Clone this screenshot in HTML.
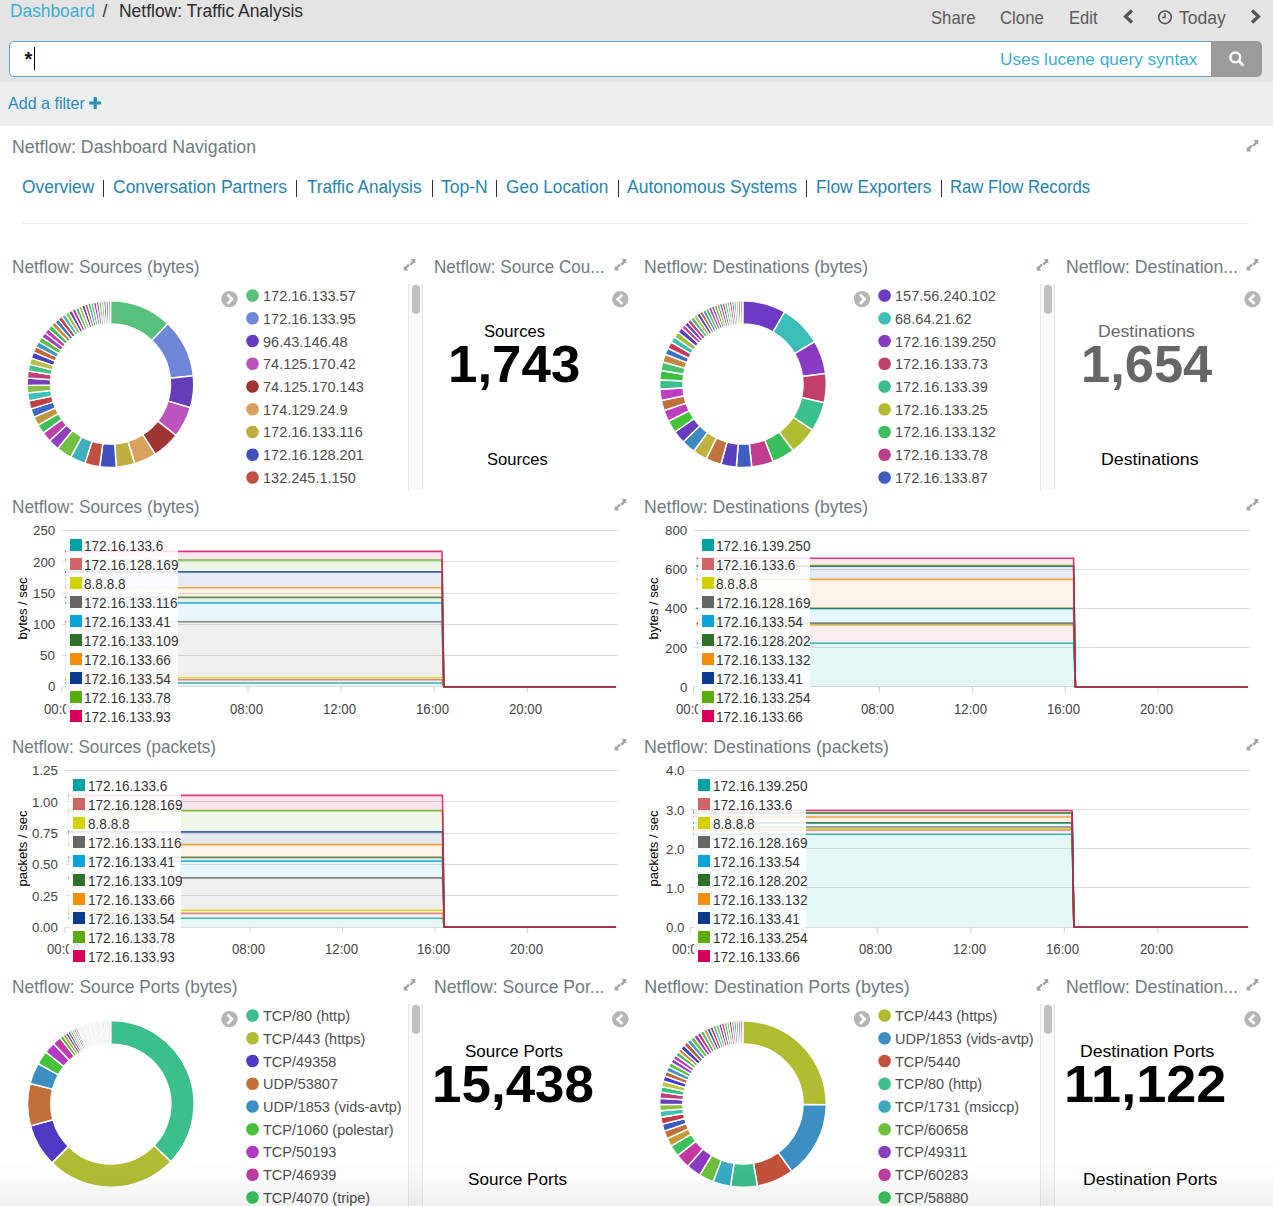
<!DOCTYPE html><html><head><meta charset="utf-8"><title>Netflow: Traffic Analysis</title><style>
html,body{margin:0;padding:0;}
body{width:1273px;height:1206px;overflow:hidden;position:relative;background:#fff;font-family:"Liberation Sans",sans-serif;}
.a{position:absolute;}
.t{position:absolute;white-space:nowrap;transform-origin:0 0;}
</style></head><body><div class="a" style="left:0.00px;top:0.00px;width:1273.00px;height:82.00px;background:#e4e4e4;"></div><div class="t" style="left:10.20px;top:3.00px;font-size:17.6px;line-height:17.6px;color:#3caed2;transform:scaleX(0.9852);">Dashboard</div><div class="t" style="left:102.50px;top:3.00px;font-size:17.6px;line-height:17.6px;color:#333;">/</div><div class="t" style="left:119.40px;top:3.00px;font-size:17.6px;line-height:17.6px;color:#2b2b2b;transform:scaleX(0.9923);">Netflow: Traffic Analysis</div><div class="t" style="left:930.70px;top:10.00px;font-size:17.7px;line-height:17.7px;color:#5a5a5a;transform:scaleX(0.9428);">Share</div><div class="t" style="left:1000.00px;top:10.00px;font-size:17.7px;line-height:17.7px;color:#5a5a5a;transform:scaleX(0.9478);">Clone</div><div class="t" style="left:1069.30px;top:10.00px;font-size:17.7px;line-height:17.7px;color:#5a5a5a;transform:scaleX(0.9351);">Edit</div><div class="t" style="left:1179.10px;top:10.00px;font-size:17.7px;line-height:17.7px;color:#5a5a5a;transform:scaleX(0.9916);">Today</div><svg class="a" style="left:1118px;top:5px" width="22" height="24" viewBox="1118 5 22 24"><path d="M1132 10.5 L1125.5 16.5 L1132 22.5" stroke="#555" stroke-width="3.2" fill="none"/></svg><svg class="a" style="left:1246px;top:5px" width="22" height="24" viewBox="1246 5 22 24"><path d="M1252 10.5 L1258.5 16.5 L1252 22.5" stroke="#555" stroke-width="3.2" fill="none"/></svg><svg class="a" style="left:1155px;top:7px" width="22" height="22" viewBox="1155 7 22 22"><circle cx="1165" cy="17.3" r="6.3" stroke="#555" stroke-width="1.6" fill="none"/><path d="M1165 13.3 V17.6 H1162" stroke="#555" stroke-width="1.5" fill="none"/></svg><div class="a" style="left:9.00px;top:41.00px;width:1203.00px;height:36.00px;background:#fff;border:1px solid #5fa9c5;border-radius:5px 0 0 5px;box-sizing:border-box"></div><div class="t" style="left:24.60px;top:49.00px;font-size:20px;line-height:20px;color:#111;font-weight:bold;">*</div><div class="a" style="left:34.00px;top:47.30px;width:1.30px;height:22.60px;background:#000;"></div><div class="t" style="left:999.90px;top:51.00px;font-size:17.4px;line-height:17.4px;color:#3caed2;transform:scaleX(0.9913);">Uses lucene query syntax</div><div class="a" style="left:1211.00px;top:41.00px;width:51.00px;height:36.00px;background:#9b9b9b;border-radius:0 5px 5px 0"></div><svg class="a" style="left:1225px;top:47px" width="24" height="24" viewBox="1225 47 24 24"><circle cx="1235.3" cy="57.4" r="4.9" stroke="#fff" stroke-width="2.4" fill="none"/><path d="M1238.8 61 L1242.6 64.8" stroke="#fff" stroke-width="2.8" stroke-linecap="round"/></svg><div class="a" style="left:0.00px;top:82.00px;width:1273.00px;height:44.00px;background:#ebeff0;"></div><div class="t" style="left:8.00px;top:95.00px;font-size:16.5px;line-height:16.5px;color:#2a8db4;transform:scaleX(0.9737);">Add a filter</div><svg class="a" style="left:88px;top:96px" width="14" height="14" viewBox="88 96 14 14"><path d="M95.2 97 V109 M89.2 103 H101.2" stroke="#2a8db4" stroke-width="3.2"/></svg><div class="t" style="left:12.20px;top:139.00px;font-size:17.9px;line-height:17.9px;color:#6f7b80;transform:scaleX(0.9894);">Netflow: Dashboard Navigation</div><svg class="a" style="left:1245px;top:138px" width="16" height="16" viewBox="1245 138 16 16"><polygon points="1253.50,139.90 1258.30,139.90 1258.30,144.70 1257.06,143.46 1253.95,146.57 1252.32,144.94 1255.43,141.83" fill="#9ea3a7"/><polygon points="1251.50,151.50 1246.70,151.50 1246.70,146.70 1247.94,147.94 1251.05,144.83 1252.68,146.46 1249.57,149.57" fill="#9ea3a7"/></svg><div class="t" style="left:22.40px;top:179.00px;font-size:17.6px;line-height:17.6px;color:#2683aa;transform:scaleX(0.9861);">Overview</div><div class="t" style="left:113.40px;top:179.00px;font-size:17.6px;line-height:17.6px;color:#2683aa;transform:scaleX(0.9940);">Conversation Partners</div><div class="t" style="left:306.70px;top:179.00px;font-size:17.6px;line-height:17.6px;color:#2683aa;transform:scaleX(0.9755);">Traffic Analysis</div><div class="t" style="left:441.00px;top:179.00px;font-size:17.6px;line-height:17.6px;color:#2683aa;transform:scaleX(0.9951);">Top-N</div><div class="t" style="left:506.40px;top:179.00px;font-size:17.6px;line-height:17.6px;color:#2683aa;transform:scaleX(0.9774);">Geo Location</div><div class="t" style="left:627.40px;top:179.00px;font-size:17.6px;line-height:17.6px;color:#2683aa;transform:scaleX(0.9940);">Autonomous Systems</div><div class="t" style="left:816.20px;top:179.00px;font-size:17.6px;line-height:17.6px;color:#2683aa;transform:scaleX(0.9845);">Flow Exporters</div><div class="t" style="left:950.10px;top:179.00px;font-size:17.6px;line-height:17.6px;color:#2683aa;transform:scaleX(0.9497);">Raw Flow Records</div><div class="a" style="left:102.70px;top:180.00px;width:1.10px;height:17.00px;background:#3a2c2c;"></div><div class="a" style="left:296.30px;top:180.00px;width:1.10px;height:17.00px;background:#3a2c2c;"></div><div class="a" style="left:431.80px;top:180.00px;width:1.10px;height:17.00px;background:#3a2c2c;"></div><div class="a" style="left:496.30px;top:180.00px;width:1.10px;height:17.00px;background:#3a2c2c;"></div><div class="a" style="left:617.80px;top:180.00px;width:1.10px;height:17.00px;background:#3a2c2c;"></div><div class="a" style="left:806.10px;top:180.00px;width:1.10px;height:17.00px;background:#3a2c2c;"></div><div class="a" style="left:940.50px;top:180.00px;width:1.10px;height:17.00px;background:#3a2c2c;"></div><div class="a" style="left:22.00px;top:222.60px;width:1227.00px;height:1.00px;background:#ececec;"></div><div class="t" style="left:12.00px;top:259.00px;font-size:17.9px;line-height:17.9px;color:#6f7b80;transform:scaleX(0.9622);">Netflow: Sources (bytes)</div><svg class="a" style="left:402px;top:257px" width="16" height="16" viewBox="402 257 16 16"><polygon points="410.50,258.90 415.30,258.90 415.30,263.70 414.06,262.46 410.95,265.57 409.32,263.94 412.43,260.83" fill="#9ea3a7"/><polygon points="408.50,270.50 403.70,270.50 403.70,265.70 404.94,266.94 408.05,263.83 409.68,265.46 406.57,268.57" fill="#9ea3a7"/></svg><div class="t" style="left:433.50px;top:259.00px;font-size:17.9px;line-height:17.9px;color:#6f7b80;transform:scaleX(0.9526);">Netflow: Source Cou...</div><svg class="a" style="left:613px;top:257px" width="16" height="16" viewBox="613 257 16 16"><polygon points="621.50,258.90 626.30,258.90 626.30,263.70 625.06,262.46 621.95,265.57 620.32,263.94 623.43,260.83" fill="#9ea3a7"/><polygon points="619.50,270.50 614.70,270.50 614.70,265.70 615.94,266.94 619.05,263.83 620.68,265.46 617.57,268.57" fill="#9ea3a7"/></svg><div class="t" style="left:644.30px;top:259.00px;font-size:17.9px;line-height:17.9px;color:#6f7b80;transform:scaleX(0.9838);">Netflow: Destinations (bytes)</div><svg class="a" style="left:1035px;top:257px" width="16" height="16" viewBox="1035 257 16 16"><polygon points="1043.50,258.90 1048.30,258.90 1048.30,263.70 1047.06,262.46 1043.95,265.57 1042.32,263.94 1045.43,260.83" fill="#9ea3a7"/><polygon points="1041.50,270.50 1036.70,270.50 1036.70,265.70 1037.94,266.94 1041.05,263.83 1042.68,265.46 1039.57,268.57" fill="#9ea3a7"/></svg><div class="t" style="left:1065.90px;top:259.00px;font-size:17.9px;line-height:17.9px;color:#6f7b80;transform:scaleX(0.9884);">Netflow: Destination...</div><svg class="a" style="left:1245px;top:257px" width="16" height="16" viewBox="1245 257 16 16"><polygon points="1253.50,258.90 1258.30,258.90 1258.30,263.70 1257.06,262.46 1253.95,265.57 1252.32,263.94 1255.43,260.83" fill="#9ea3a7"/><polygon points="1251.50,270.50 1246.70,270.50 1246.70,265.70 1247.94,266.94 1251.05,263.83 1252.68,265.46 1249.57,268.57" fill="#9ea3a7"/></svg><svg class="a" style="left:25px;top:298px" width="171" height="172" viewBox="25 298 171 172"><path d="M110.50 300.80 A83.30 83.30 0 0 1 167.84 323.68 L151.80 340.58 A60.00 60.00 0 0 0 110.50 324.10 Z" fill="#57c17b" stroke="#fff" stroke-width="1.50"/><path d="M167.84 323.68 A83.30 83.30 0 0 1 193.39 375.83 L170.20 378.14 A60.00 60.00 0 0 0 151.80 340.58 Z" fill="#6f87d8" stroke="#fff" stroke-width="1.50"/><path d="M193.39 375.83 A83.30 83.30 0 0 1 190.37 407.76 L168.03 401.14 A60.00 60.00 0 0 0 170.20 378.14 Z" fill="#663db8" stroke="#fff" stroke-width="1.50"/><path d="M190.37 407.76 A83.30 83.30 0 0 1 176.05 435.50 L157.72 421.12 A60.00 60.00 0 0 0 168.03 401.14 Z" fill="#bc52bc" stroke="#fff" stroke-width="1.50"/><path d="M176.05 435.50 A83.30 83.30 0 0 1 155.26 454.35 L142.74 434.70 A60.00 60.00 0 0 0 157.72 421.12 Z" fill="#9e3533" stroke="#fff" stroke-width="1.50"/><path d="M155.26 454.35 A83.30 83.30 0 0 1 134.72 463.80 L127.94 441.51 A60.00 60.00 0 0 0 142.74 434.70 Z" fill="#daa05d" stroke="#fff" stroke-width="1.50"/><path d="M134.72 463.80 A83.30 83.30 0 0 1 116.31 467.20 L114.69 443.95 A60.00 60.00 0 0 0 127.94 441.51 Z" fill="#bfaf40" stroke="#fff" stroke-width="1.50"/><path d="M116.31 467.20 A83.30 83.30 0 0 1 99.77 466.71 L102.77 443.60 A60.00 60.00 0 0 0 114.69 443.95 Z" fill="#4050bf" stroke="#fff" stroke-width="1.50"/><path d="M99.77 466.71 A83.30 83.30 0 0 1 84.90 463.37 L92.06 441.20 A60.00 60.00 0 0 0 102.77 443.60 Z" fill="#bf5040" stroke="#fff" stroke-width="1.50"/><path d="M84.90 463.37 A83.30 83.30 0 0 1 70.62 457.24 L81.78 436.78 A60.00 60.00 0 0 0 92.06 441.20 Z" fill="#40afbf" stroke="#fff" stroke-width="1.50"/><path d="M70.62 457.24 A83.30 83.30 0 0 1 57.74 448.56 L72.50 430.53 A60.00 60.00 0 0 0 81.78 436.78 Z" fill="#70bf40" stroke="#fff" stroke-width="1.50"/><path d="M57.74 448.56 A83.30 83.30 0 0 1 49.58 440.91 L66.62 425.02 A60.00 60.00 0 0 0 72.50 430.53 Z" fill="#8f40bf" stroke="#fff" stroke-width="1.50"/><path d="M49.58 440.91 A83.30 83.30 0 0 1 43.11 433.06 L61.96 419.37 A60.00 60.00 0 0 0 66.62 425.02 Z" fill="#bf40a7" stroke="#fff" stroke-width="1.50"/><path d="M43.11 433.06 A83.30 83.30 0 0 1 38.02 425.16 L58.29 413.67 A60.00 60.00 0 0 0 61.96 419.37 Z" fill="#40bf58" stroke="#fff" stroke-width="1.30"/><path d="M38.02 425.16 A83.30 83.30 0 0 1 34.01 417.08 L55.40 407.85 A60.00 60.00 0 0 0 58.29 413.67 Z" fill="#bf9740" stroke="#fff" stroke-width="1.30"/><path d="M34.01 417.08 A83.30 83.30 0 0 1 30.99 408.96 L53.23 402.00 A60.00 60.00 0 0 0 55.40 407.85 Z" fill="#4068bf" stroke="#fff" stroke-width="1.30"/><path d="M30.99 408.96 A83.30 83.30 0 0 1 28.91 400.90 L51.73 396.20 A60.00 60.00 0 0 0 53.23 402.00 Z" fill="#bf4048" stroke="#fff" stroke-width="1.30"/><path d="M28.91 400.90 A83.30 83.30 0 0 1 27.68 393.02 L50.84 390.52 A60.00 60.00 0 0 0 51.73 396.20 Z" fill="#40bfb7" stroke="#fff" stroke-width="1.30"/><path d="M27.68 393.02 A83.30 83.30 0 0 1 27.21 385.37 L50.51 385.01 A60.00 60.00 0 0 0 50.84 390.52 Z" fill="#87bf40" stroke="#fff" stroke-width="1.30"/><path d="M27.21 385.37 A83.30 83.30 0 0 1 27.42 378.01 L50.66 379.71 A60.00 60.00 0 0 0 50.51 385.01 Z" fill="#7840bf" stroke="#fff" stroke-width="1.30"/><path d="M27.42 378.01 A83.30 83.30 0 0 1 28.24 370.99 L51.25 374.66 A60.00 60.00 0 0 0 50.66 379.71 Z" fill="#bf4078" stroke="#fff" stroke-width="1.30"/><path d="M28.24 370.99 A83.30 83.30 0 0 1 29.58 364.34 L52.21 369.87 A60.00 60.00 0 0 0 51.25 374.66 Z" fill="#40bf87" stroke="#fff" stroke-width="1.30"/><path d="M29.58 364.34 A83.30 83.30 0 0 1 31.37 358.08 L53.50 365.36 A60.00 60.00 0 0 0 52.21 369.87 Z" fill="#b7bf40" stroke="#fff" stroke-width="1.30"/><path d="M31.37 358.08 A83.30 83.30 0 0 1 33.54 352.22 L55.07 361.14 A60.00 60.00 0 0 0 53.50 365.36 Z" fill="#4840bf" stroke="#fff" stroke-width="1.30"/><path d="M33.54 352.22 A83.30 83.30 0 0 1 36.04 346.77 L56.86 357.21 A60.00 60.00 0 0 0 55.07 361.14 Z" fill="#bf6840" stroke="#fff" stroke-width="1.30"/><path d="M36.04 346.77 A83.30 83.30 0 0 1 38.79 341.71 L58.85 353.57 A60.00 60.00 0 0 0 56.86 357.21 Z" fill="#4097bf" stroke="#fff" stroke-width="1.30"/><path d="M38.79 341.71 A83.30 83.30 0 0 1 41.76 337.04 L60.99 350.21 A60.00 60.00 0 0 0 58.85 353.57 Z" fill="#58bf40" stroke="#fff" stroke-width="1.30"/><path d="M41.76 337.04 A83.30 83.30 0 0 1 44.90 332.76 L63.25 347.12 A60.00 60.00 0 0 0 60.99 350.21 Z" fill="#a740bf" stroke="#fff" stroke-width="1.30"/><path d="M44.90 332.76 A83.30 83.30 0 0 1 48.16 328.84 L65.60 344.30 A60.00 60.00 0 0 0 63.25 347.12 Z" fill="#bf40b3" stroke="#fff" stroke-width="1.30"/><path d="M48.16 328.84 A83.30 83.30 0 0 1 51.52 325.28 L68.02 341.73 A60.00 60.00 0 0 0 65.60 344.30 Z" fill="#40bf4c" stroke="#fff" stroke-width="1.30"/><path d="M51.52 325.28 A83.30 83.30 0 0 1 54.93 322.05 L70.47 339.40 A60.00 60.00 0 0 0 68.02 341.73 Z" fill="#bf8b40" stroke="#fff" stroke-width="1.30"/><path d="M54.93 322.05 A83.30 83.30 0 0 1 58.37 319.13 L72.95 337.30 A60.00 60.00 0 0 0 70.47 339.40 Z" fill="#4074bf" stroke="#fff" stroke-width="1.30"/><path d="M58.37 319.13 A83.30 83.30 0 0 1 61.81 316.51 L75.43 335.42 A60.00 60.00 0 0 0 72.95 337.30 Z" fill="#bf4054" stroke="#fff" stroke-width="1.30"/><path d="M61.81 316.51 A83.30 83.30 0 0 1 65.24 314.17 L77.90 333.73 A60.00 60.00 0 0 0 75.43 335.42 Z" fill="#40bfab" stroke="#fff" stroke-width="1.30"/><path d="M65.24 314.17 A83.30 83.30 0 0 1 68.64 312.08 L80.35 332.22 A60.00 60.00 0 0 0 77.90 333.73 Z" fill="#93bf40" stroke="#fff" stroke-width="1.30"/><path d="M68.64 312.08 A83.30 83.30 0 0 1 72.00 310.23 L82.77 330.89 A60.00 60.00 0 0 0 80.35 332.22 Z" fill="#6c40bf" stroke="#fff" stroke-width="1.30"/><path d="M72.00 310.23 A83.30 83.30 0 0 1 75.30 308.60 L85.14 329.72 A60.00 60.00 0 0 0 82.77 330.89 Z" fill="#bf4083" stroke="#fff" stroke-width="1.30"/><path d="M75.30 308.60 A83.30 83.30 0 0 1 78.53 307.18 L87.47 328.70 A60.00 60.00 0 0 0 85.14 329.72 Z" fill="#40bf7c" stroke="#fff" stroke-width="1.30"/><path d="M78.53 307.18 A83.30 83.30 0 0 1 81.68 305.94 L89.74 327.80 A60.00 60.00 0 0 0 87.47 328.70 Z" fill="#bfbb40" stroke="#fff" stroke-width="1.30"/><path d="M81.68 305.94 A83.30 83.30 0 0 1 84.76 304.88 L91.96 327.04 A60.00 60.00 0 0 0 89.74 327.80 Z" fill="#4044bf" stroke="#fff" stroke-width="1.30"/><path d="M84.76 304.88 A83.30 83.30 0 0 1 87.74 303.97 L94.11 326.38 A60.00 60.00 0 0 0 91.96 327.04 Z" fill="#bf5c40" stroke="#fff" stroke-width="1.30"/><path d="M87.74 303.97 A83.30 83.30 0 0 1 90.64 303.20 L96.20 325.83 A60.00 60.00 0 0 0 94.11 326.38 Z" fill="#40a3bf" stroke="#fff" stroke-width="1.30"/><path d="M90.64 303.20 A83.30 83.30 0 0 1 93.45 302.56 L98.22 325.37 A60.00 60.00 0 0 0 96.20 325.83 Z" fill="#64bf40" stroke="#fff" stroke-width="1.30"/><path d="M93.45 302.56 A83.30 83.30 0 0 1 96.16 302.04 L100.17 325.00 A60.00 60.00 0 0 0 98.22 325.37 Z" fill="#9b40bf" stroke="#fff" stroke-width="1.30"/><path d="M96.16 302.04 A83.30 83.30 0 0 1 98.78 301.63 L102.06 324.70 A60.00 60.00 0 0 0 100.17 325.00 Z" fill="#bf409b" stroke="#fff" stroke-width="1.30"/><path d="M98.78 301.63 A83.30 83.30 0 0 1 101.31 301.31 L103.88 324.47 A60.00 60.00 0 0 0 102.06 324.70 Z" fill="#40bf64" stroke="#fff" stroke-width="1.30"/><path d="M101.31 301.31 A83.30 83.30 0 0 1 103.74 301.07 L105.63 324.30 A60.00 60.00 0 0 0 103.88 324.47 Z" fill="#bfa340" stroke="#fff" stroke-width="1.30"/><path d="M103.74 301.07 A83.30 83.30 0 0 1 106.09 300.92 L107.32 324.18 A60.00 60.00 0 0 0 105.63 324.30 Z" fill="#405cbf" stroke="#fff" stroke-width="1.30"/><path d="M106.09 300.92 A83.30 83.30 0 0 1 108.34 300.83 L108.94 324.12 A60.00 60.00 0 0 0 107.32 324.18 Z" fill="#bf4440" stroke="#fff" stroke-width="1.30"/><path d="M108.34 300.83 A83.30 83.30 0 0 1 110.50 300.80 L110.50 324.10 A60.00 60.00 0 0 0 108.94 324.12 Z" fill="#40bbbf" stroke="#fff" stroke-width="1.30"/></svg><svg class="a" style="left:657px;top:298px" width="172" height="172" viewBox="657 298 172 172"><path d="M743.00 300.80 A83.30 83.30 0 0 1 784.65 311.96 L773.00 332.14 A60.00 60.00 0 0 0 743.00 324.10 Z" fill="#6c3ac3" stroke="#fff" stroke-width="1.50"/><path d="M784.65 311.96 A83.30 83.30 0 0 1 814.70 341.70 L794.64 353.56 A60.00 60.00 0 0 0 773.00 332.14 Z" fill="#3dbdb8" stroke="#fff" stroke-width="1.50"/><path d="M814.70 341.70 A83.30 83.30 0 0 1 825.62 373.52 L802.51 376.48 A60.00 60.00 0 0 0 794.64 353.56 Z" fill="#8a3ac3" stroke="#fff" stroke-width="1.50"/><path d="M825.62 373.52 A83.30 83.30 0 0 1 824.17 402.84 L801.46 397.60 A60.00 60.00 0 0 0 802.51 376.48 Z" fill="#c03d6a" stroke="#fff" stroke-width="1.50"/><path d="M824.17 402.84 A83.30 83.30 0 0 1 812.46 430.08 L793.03 417.22 A60.00 60.00 0 0 0 801.46 397.60 Z" fill="#3bbf8c" stroke="#fff" stroke-width="1.50"/><path d="M812.46 430.08 A83.30 83.30 0 0 1 793.13 450.63 L779.11 432.02 A60.00 60.00 0 0 0 793.03 417.22 Z" fill="#b2bc33" stroke="#fff" stroke-width="1.50"/><path d="M793.13 450.63 A83.30 83.30 0 0 1 773.12 461.76 L764.70 440.04 A60.00 60.00 0 0 0 779.11 432.02 Z" fill="#3bbf5a" stroke="#fff" stroke-width="1.50"/><path d="M773.12 461.76 A83.30 83.30 0 0 1 751.71 466.94 L749.27 443.77 A60.00 60.00 0 0 0 764.70 440.04 Z" fill="#c03d8c" stroke="#fff" stroke-width="1.50"/><path d="M751.71 466.94 A83.30 83.30 0 0 1 736.32 467.13 L738.19 443.91 A60.00 60.00 0 0 0 749.27 443.77 Z" fill="#3d5dc0" stroke="#fff" stroke-width="1.50"/><path d="M736.32 467.13 A83.30 83.30 0 0 1 720.88 464.41 L727.07 441.95 A60.00 60.00 0 0 0 738.19 443.91 Z" fill="#5a3dc0" stroke="#fff" stroke-width="1.50"/><path d="M720.88 464.41 A83.30 83.30 0 0 1 706.22 458.84 L716.51 437.94 A60.00 60.00 0 0 0 727.07 441.95 Z" fill="#c0733d" stroke="#fff" stroke-width="1.50"/><path d="M706.22 458.84 A83.30 83.30 0 0 1 693.69 451.23 L707.48 432.46 A60.00 60.00 0 0 0 716.51 437.94 Z" fill="#c0b03d" stroke="#fff" stroke-width="1.50"/><path d="M693.69 451.23 A83.30 83.30 0 0 1 683.08 441.97 L699.84 425.78 A60.00 60.00 0 0 0 707.48 432.46 Z" fill="#3d8ac0" stroke="#fff" stroke-width="1.50"/><path d="M683.08 441.97 A83.30 83.30 0 0 1 674.85 432.00 L693.91 418.60 A60.00 60.00 0 0 0 699.84 425.78 Z" fill="#6a3dc0" stroke="#fff" stroke-width="1.50"/><path d="M674.85 432.00 A83.30 83.30 0 0 1 668.39 421.14 L689.26 410.78 A60.00 60.00 0 0 0 693.91 418.60 Z" fill="#45c13a" stroke="#fff" stroke-width="1.50"/><path d="M668.39 421.14 A83.30 83.30 0 0 1 664.00 410.53 L686.10 403.14 A60.00 60.00 0 0 0 689.26 410.78 Z" fill="#c03dc0" stroke="#fff" stroke-width="1.50"/><path d="M664.00 410.53 A83.30 83.30 0 0 1 661.31 400.42 L684.16 395.86 A60.00 60.00 0 0 0 686.10 403.14 Z" fill="#c0703d" stroke="#fff" stroke-width="1.50"/><path d="M661.31 400.42 A83.30 83.30 0 0 1 659.86 389.33 L683.12 387.87 A60.00 60.00 0 0 0 684.16 395.86 Z" fill="#c03dc0" stroke="#fff" stroke-width="1.50"/><path d="M659.86 389.33 A83.30 83.30 0 0 1 659.81 379.74 L683.08 380.96 A60.00 60.00 0 0 0 683.12 387.87 Z" fill="#3bbf8c" stroke="#fff" stroke-width="1.50"/><path d="M659.81 379.74 A83.30 83.30 0 0 1 660.82 370.49 L683.81 374.30 A60.00 60.00 0 0 0 683.08 380.96 Z" fill="#3dc040" stroke="#fff" stroke-width="1.50"/><path d="M660.82 370.49 A83.30 83.30 0 0 1 662.69 361.98 L685.15 368.17 A60.00 60.00 0 0 0 683.81 374.30 Z" fill="#4cc06a" stroke="#fff" stroke-width="1.50"/><path d="M662.69 361.98 A83.30 83.30 0 0 1 665.23 354.25 L686.99 362.60 A60.00 60.00 0 0 0 685.15 368.17 Z" fill="#c0883d" stroke="#fff" stroke-width="1.50"/><path d="M665.23 354.25 A83.30 83.30 0 0 1 667.81 348.24 L688.84 358.27 A60.00 60.00 0 0 0 686.99 362.60 Z" fill="#3d70c0" stroke="#fff" stroke-width="1.50"/><path d="M667.81 348.24 A83.30 83.30 0 0 1 671.08 342.07 L691.20 353.83 A60.00 60.00 0 0 0 688.84 358.27 Z" fill="#c03d55" stroke="#fff" stroke-width="1.50"/><path d="M671.08 342.07 A83.30 83.30 0 0 1 674.35 336.92 L693.55 350.12 A60.00 60.00 0 0 0 691.20 353.83 Z" fill="#3dc0a8" stroke="#fff" stroke-width="1.50"/><path d="M674.35 336.92 A83.30 83.30 0 0 1 677.99 332.02 L696.17 346.59 A60.00 60.00 0 0 0 693.55 350.12 Z" fill="#9ac03d" stroke="#fff" stroke-width="1.50"/><path d="M677.99 332.02 A83.30 83.30 0 0 1 681.58 327.82 L698.76 343.56 A60.00 60.00 0 0 0 696.17 346.59 Z" fill="#5a3dc0" stroke="#fff" stroke-width="1.50"/><path d="M681.58 327.82 A83.30 83.30 0 0 1 684.61 324.69 L700.95 341.30 A60.00 60.00 0 0 0 698.76 343.56 Z" fill="#c03db0" stroke="#fff" stroke-width="1.50"/><path d="M684.61 324.69 A83.30 83.30 0 0 1 687.62 321.88 L703.11 339.28 A60.00 60.00 0 0 0 700.95 341.30 Z" fill="#7840bf" stroke="#fff" stroke-width="1.20"/><path d="M687.62 321.88 A83.30 83.30 0 0 1 690.64 319.31 L705.29 337.43 A60.00 60.00 0 0 0 703.11 339.28 Z" fill="#bf4078" stroke="#fff" stroke-width="1.20"/><path d="M690.64 319.31 A83.30 83.30 0 0 1 693.67 316.97 L707.47 335.75 A60.00 60.00 0 0 0 705.29 337.43 Z" fill="#40bf87" stroke="#fff" stroke-width="1.20"/><path d="M693.67 316.97 A83.30 83.30 0 0 1 696.70 314.85 L709.65 334.22 A60.00 60.00 0 0 0 707.47 335.75 Z" fill="#b7bf40" stroke="#fff" stroke-width="1.20"/><path d="M696.70 314.85 A83.30 83.30 0 0 1 699.70 312.94 L711.81 332.84 A60.00 60.00 0 0 0 709.65 334.22 Z" fill="#4840bf" stroke="#fff" stroke-width="1.20"/><path d="M699.70 312.94 A83.30 83.30 0 0 1 702.68 311.21 L713.96 331.60 A60.00 60.00 0 0 0 711.81 332.84 Z" fill="#bf6840" stroke="#fff" stroke-width="1.20"/><path d="M702.68 311.21 A83.30 83.30 0 0 1 705.62 309.66 L716.07 330.48 A60.00 60.00 0 0 0 713.96 331.60 Z" fill="#4097bf" stroke="#fff" stroke-width="1.20"/><path d="M705.62 309.66 A83.30 83.30 0 0 1 708.51 308.28 L718.15 329.49 A60.00 60.00 0 0 0 716.07 330.48 Z" fill="#58bf40" stroke="#fff" stroke-width="1.20"/><path d="M708.51 308.28 A83.30 83.30 0 0 1 711.34 307.05 L720.20 328.60 A60.00 60.00 0 0 0 718.15 329.49 Z" fill="#a740bf" stroke="#fff" stroke-width="1.20"/><path d="M711.34 307.05 A83.30 83.30 0 0 1 714.12 305.97 L722.20 327.82 A60.00 60.00 0 0 0 720.20 328.60 Z" fill="#bf40b3" stroke="#fff" stroke-width="1.20"/><path d="M714.12 305.97 A83.30 83.30 0 0 1 716.84 305.01 L724.16 327.14 A60.00 60.00 0 0 0 722.20 327.82 Z" fill="#40bf4c" stroke="#fff" stroke-width="1.20"/><path d="M716.84 305.01 A83.30 83.30 0 0 1 719.49 304.19 L726.07 326.54 A60.00 60.00 0 0 0 724.16 327.14 Z" fill="#bf8b40" stroke="#fff" stroke-width="1.20"/><path d="M719.49 304.19 A83.30 83.30 0 0 1 722.08 303.47 L727.93 326.02 A60.00 60.00 0 0 0 726.07 326.54 Z" fill="#4074bf" stroke="#fff" stroke-width="1.20"/><path d="M722.08 303.47 A83.30 83.30 0 0 1 724.59 302.86 L729.74 325.58 A60.00 60.00 0 0 0 727.93 326.02 Z" fill="#bf4054" stroke="#fff" stroke-width="1.20"/><path d="M724.59 302.86 A83.30 83.30 0 0 1 727.03 302.34 L731.50 325.21 A60.00 60.00 0 0 0 729.74 325.58 Z" fill="#40bfab" stroke="#fff" stroke-width="1.20"/><path d="M727.03 302.34 A83.30 83.30 0 0 1 729.40 301.92 L733.21 324.90 A60.00 60.00 0 0 0 731.50 325.21 Z" fill="#93bf40" stroke="#fff" stroke-width="1.20"/><path d="M729.40 301.92 A83.30 83.30 0 0 1 731.70 301.57 L734.86 324.65 A60.00 60.00 0 0 0 733.21 324.90 Z" fill="#6c40bf" stroke="#fff" stroke-width="1.20"/><path d="M731.70 301.57 A83.30 83.30 0 0 1 733.93 301.30 L736.47 324.46 A60.00 60.00 0 0 0 734.86 324.65 Z" fill="#bf4083" stroke="#fff" stroke-width="1.20"/><path d="M733.93 301.30 A83.30 83.30 0 0 1 736.08 301.09 L738.02 324.31 A60.00 60.00 0 0 0 736.47 324.46 Z" fill="#40bf7c" stroke="#fff" stroke-width="1.20"/><path d="M736.08 301.09 A83.30 83.30 0 0 1 738.17 300.94 L739.52 324.20 A60.00 60.00 0 0 0 738.02 324.31 Z" fill="#bfbb40" stroke="#fff" stroke-width="1.20"/><path d="M738.17 300.94 A83.30 83.30 0 0 1 740.18 300.85 L740.97 324.13 A60.00 60.00 0 0 0 739.52 324.20 Z" fill="#4044bf" stroke="#fff" stroke-width="1.20"/><path d="M740.18 300.85 A83.30 83.30 0 0 1 742.13 300.80 L742.37 324.10 A60.00 60.00 0 0 0 740.97 324.13 Z" fill="#bf5c40" stroke="#fff" stroke-width="1.20"/></svg><svg class="a" style="left:219px;top:289px" width="21" height="21" viewBox="219 289 21 21"><circle cx="229.50" cy="299.10" r="8.20" fill="#b5b5b5"/><path d="M227.50 294.50 L232.10 299.10 L227.50 303.70" stroke="#fff" stroke-width="2.7" fill="none" stroke-linecap="butt" stroke-linejoin="miter"/></svg><svg class="a" style="left:852px;top:289px" width="20" height="21" viewBox="852 289 20 21"><circle cx="862.00" cy="299.10" r="8.20" fill="#b5b5b5"/><path d="M860.00 294.50 L864.60 299.10 L860.00 303.70" stroke="#fff" stroke-width="2.7" fill="none" stroke-linecap="butt" stroke-linejoin="miter"/></svg><svg class="a" style="left:245px;top:288px" width="15" height="15" viewBox="245 288 15 15"><circle cx="252.50" cy="295.50" r="6.3" fill="#57c17b"/></svg><div class="t" style="left:262.70px;top:288.00px;font-size:15.5px;line-height:15.5px;color:#4d4d4d;transform:scaleX(0.9355);">172.16.133.57</div><svg class="a" style="left:245px;top:311px" width="15" height="15" viewBox="245 311 15 15"><circle cx="252.50" cy="318.25" r="6.3" fill="#6f87d8"/></svg><div class="t" style="left:262.70px;top:311.00px;font-size:15.5px;line-height:15.5px;color:#4d4d4d;transform:scaleX(0.9355);">172.16.133.95</div><svg class="a" style="left:245px;top:334px" width="15" height="14" viewBox="245 334 15 14"><circle cx="252.50" cy="341.00" r="6.3" fill="#663db8"/></svg><div class="t" style="left:262.70px;top:334.00px;font-size:15.5px;line-height:15.5px;color:#4d4d4d;transform:scaleX(0.9355);">96.43.146.48</div><svg class="a" style="left:245px;top:356px" width="15" height="15" viewBox="245 356 15 15"><circle cx="252.50" cy="363.75" r="6.3" fill="#bc52bc"/></svg><div class="t" style="left:262.70px;top:356.00px;font-size:15.5px;line-height:15.5px;color:#4d4d4d;transform:scaleX(0.9355);">74.125.170.42</div><svg class="a" style="left:245px;top:379px" width="15" height="15" viewBox="245 379 15 15"><circle cx="252.50" cy="386.50" r="6.3" fill="#9e3533"/></svg><div class="t" style="left:262.70px;top:379.00px;font-size:15.5px;line-height:15.5px;color:#4d4d4d;transform:scaleX(0.9355);">74.125.170.143</div><svg class="a" style="left:245px;top:402px" width="15" height="15" viewBox="245 402 15 15"><circle cx="252.50" cy="409.25" r="6.3" fill="#daa05d"/></svg><div class="t" style="left:262.70px;top:402.00px;font-size:15.5px;line-height:15.5px;color:#4d4d4d;transform:scaleX(0.9355);">174.129.24.9</div><svg class="a" style="left:245px;top:425px" width="15" height="14" viewBox="245 425 15 14"><circle cx="252.50" cy="432.00" r="6.3" fill="#bfaf40"/></svg><div class="t" style="left:262.70px;top:424.00px;font-size:15.5px;line-height:15.5px;color:#4d4d4d;transform:scaleX(0.9355);">172.16.133.116</div><svg class="a" style="left:245px;top:447px" width="15" height="15" viewBox="245 447 15 15"><circle cx="252.50" cy="454.75" r="6.3" fill="#4050bf"/></svg><div class="t" style="left:262.70px;top:447.00px;font-size:15.5px;line-height:15.5px;color:#4d4d4d;transform:scaleX(0.9355);">172.16.128.201</div><svg class="a" style="left:245px;top:470px" width="15" height="15" viewBox="245 470 15 15"><circle cx="252.50" cy="477.50" r="6.3" fill="#bf5040"/></svg><div class="t" style="left:262.70px;top:470.00px;font-size:15.5px;line-height:15.5px;color:#4d4d4d;transform:scaleX(0.9355);">132.245.1.150</div><svg class="a" style="left:877px;top:288px" width="15" height="15" viewBox="877 288 15 15"><circle cx="884.60" cy="295.50" r="6.3" fill="#6c3ac3"/></svg><div class="t" style="left:894.80px;top:288.00px;font-size:15.5px;line-height:15.5px;color:#4d4d4d;transform:scaleX(0.9355);">157.56.240.102</div><svg class="a" style="left:877px;top:311px" width="15" height="15" viewBox="877 311 15 15"><circle cx="884.60" cy="318.25" r="6.3" fill="#3dbdb8"/></svg><div class="t" style="left:894.80px;top:311.00px;font-size:15.5px;line-height:15.5px;color:#4d4d4d;transform:scaleX(0.9355);">68.64.21.62</div><svg class="a" style="left:877px;top:334px" width="15" height="14" viewBox="877 334 15 14"><circle cx="884.60" cy="341.00" r="6.3" fill="#8a3ac3"/></svg><div class="t" style="left:894.80px;top:334.00px;font-size:15.5px;line-height:15.5px;color:#4d4d4d;transform:scaleX(0.9355);">172.16.139.250</div><svg class="a" style="left:877px;top:356px" width="15" height="15" viewBox="877 356 15 15"><circle cx="884.60" cy="363.75" r="6.3" fill="#c03d6a"/></svg><div class="t" style="left:894.80px;top:356.00px;font-size:15.5px;line-height:15.5px;color:#4d4d4d;transform:scaleX(0.9355);">172.16.133.73</div><svg class="a" style="left:877px;top:379px" width="15" height="15" viewBox="877 379 15 15"><circle cx="884.60" cy="386.50" r="6.3" fill="#3bbf8c"/></svg><div class="t" style="left:894.80px;top:379.00px;font-size:15.5px;line-height:15.5px;color:#4d4d4d;transform:scaleX(0.9355);">172.16.133.39</div><svg class="a" style="left:877px;top:402px" width="15" height="15" viewBox="877 402 15 15"><circle cx="884.60" cy="409.25" r="6.3" fill="#b2bc33"/></svg><div class="t" style="left:894.80px;top:402.00px;font-size:15.5px;line-height:15.5px;color:#4d4d4d;transform:scaleX(0.9355);">172.16.133.25</div><svg class="a" style="left:877px;top:425px" width="15" height="14" viewBox="877 425 15 14"><circle cx="884.60" cy="432.00" r="6.3" fill="#3bbf5a"/></svg><div class="t" style="left:894.80px;top:424.00px;font-size:15.5px;line-height:15.5px;color:#4d4d4d;transform:scaleX(0.9355);">172.16.133.132</div><svg class="a" style="left:877px;top:447px" width="15" height="15" viewBox="877 447 15 15"><circle cx="884.60" cy="454.75" r="6.3" fill="#c03d8c"/></svg><div class="t" style="left:894.80px;top:447.00px;font-size:15.5px;line-height:15.5px;color:#4d4d4d;transform:scaleX(0.9355);">172.16.133.78</div><svg class="a" style="left:877px;top:470px" width="15" height="15" viewBox="877 470 15 15"><circle cx="884.60" cy="477.50" r="6.3" fill="#3d5dc0"/></svg><div class="t" style="left:894.80px;top:470.00px;font-size:15.5px;line-height:15.5px;color:#4d4d4d;transform:scaleX(0.9355);">172.16.133.87</div><div class="a" style="left:408.00px;top:283.50px;width:15.00px;height:206.50px;background:#f9f9f9;border-left:1px solid #e7e7e7;border-right:1px solid #e7e7e7;box-sizing:border-box"></div><div class="a" style="left:412.00px;top:285.20px;width:8.00px;height:28.60px;background:#c1c1c1;border-radius:4px"></div><div class="a" style="left:1040.00px;top:283.50px;width:15.00px;height:206.50px;background:#f9f9f9;border-left:1px solid #e7e7e7;border-right:1px solid #e7e7e7;box-sizing:border-box"></div><div class="a" style="left:1044.00px;top:285.20px;width:8.00px;height:28.60px;background:#c1c1c1;border-radius:4px"></div><svg class="a" style="left:610px;top:289px" width="21" height="21" viewBox="610 289 21 21"><circle cx="620.30" cy="299.30" r="8.20" fill="#b5b5b5"/><path d="M622.30 294.70 L617.70 299.30 L622.30 303.90" stroke="#fff" stroke-width="2.7" fill="none" stroke-linecap="butt" stroke-linejoin="miter"/></svg><svg class="a" style="left:1242px;top:289px" width="21" height="21" viewBox="1242 289 21 21"><circle cx="1252.50" cy="299.30" r="8.20" fill="#b5b5b5"/><path d="M1254.50 294.70 L1249.90 299.30 L1254.50 303.90" stroke="#fff" stroke-width="2.7" fill="none" stroke-linecap="butt" stroke-linejoin="miter"/></svg><div class="t" style="left:483.70px;top:323.00px;font-size:17.2px;line-height:17.2px;color:#000;transform:scaleX(0.9675);">Sources</div><div class="t" style="left:447.65px;top:339.00px;font-size:51px;line-height:51px;color:#000;font-weight:bold;transform:scaleX(1.0366);">1,743</div><div class="t" style="left:486.65px;top:451.00px;font-size:17.2px;line-height:17.2px;color:#000;transform:scaleX(0.9627);">Sources</div><div class="t" style="left:1098.35px;top:323.00px;font-size:17.2px;line-height:17.2px;color:#666;transform:scaleX(1.0245);">Destinations</div><div class="t" style="left:1080.95px;top:339.00px;font-size:51px;line-height:51px;color:#666;font-weight:bold;transform:scaleX(1.0288);">1,654</div><div class="t" style="left:1100.75px;top:451.00px;font-size:17.2px;line-height:17.2px;color:#000;transform:scaleX(1.0309);">Destinations</div><div class="t" style="left:12.00px;top:499.00px;font-size:17.9px;line-height:17.9px;color:#6f7b80;transform:scaleX(0.9622);">Netflow: Sources (bytes)</div><svg class="a" style="left:613px;top:497px" width="16" height="16" viewBox="613 497 16 16"><polygon points="621.50,498.90 626.30,498.90 626.30,503.70 625.06,502.46 621.95,505.57 620.32,503.94 623.43,500.83" fill="#9ea3a7"/><polygon points="619.50,510.50 614.70,510.50 614.70,505.70 615.94,506.94 619.05,503.83 620.68,505.46 617.57,508.57" fill="#9ea3a7"/></svg><div class="t" style="left:644.30px;top:499.00px;font-size:17.9px;line-height:17.9px;color:#6f7b80;transform:scaleX(0.9838);">Netflow: Destinations (bytes)</div><svg class="a" style="left:1245px;top:497px" width="16" height="16" viewBox="1245 497 16 16"><polygon points="1253.50,498.90 1258.30,498.90 1258.30,503.70 1257.06,502.46 1253.95,505.57 1252.32,503.94 1255.43,500.83" fill="#9ea3a7"/><polygon points="1251.50,510.50 1246.70,510.50 1246.70,505.70 1247.94,506.94 1251.05,503.83 1252.68,505.46 1249.57,508.57" fill="#9ea3a7"/></svg><svg class="a" style="left:60px;top:526px" width="564" height="171" viewBox="60 526 564 171"><line x1="62.00" y1="530.50" x2="618.00" y2="530.50" stroke="#dedede" stroke-width="1"/><line x1="62.00" y1="561.50" x2="618.00" y2="561.50" stroke="#dedede" stroke-width="1"/><line x1="62.00" y1="593.50" x2="618.00" y2="593.50" stroke="#dedede" stroke-width="1"/><line x1="62.00" y1="624.50" x2="618.00" y2="624.50" stroke="#dedede" stroke-width="1"/><line x1="62.00" y1="655.50" x2="618.00" y2="655.50" stroke="#dedede" stroke-width="1"/><line x1="62.00" y1="686.50" x2="618.00" y2="686.50" stroke="#dedede" stroke-width="1"/><line x1="61.90" y1="686.60" x2="61.90" y2="692.60" stroke="#d6d6d6" stroke-width="1.2"/><line x1="154.96" y1="686.60" x2="154.96" y2="692.60" stroke="#d6d6d6" stroke-width="1.2"/><line x1="248.02" y1="686.60" x2="248.02" y2="692.60" stroke="#d6d6d6" stroke-width="1.2"/><line x1="341.08" y1="686.60" x2="341.08" y2="692.60" stroke="#d6d6d6" stroke-width="1.2"/><line x1="434.14" y1="686.60" x2="434.14" y2="692.60" stroke="#d6d6d6" stroke-width="1.2"/><line x1="527.20" y1="686.60" x2="527.20" y2="692.60" stroke="#d6d6d6" stroke-width="1.2"/><polygon points="65.00,683.00 442.00,683.00 442.00,686.60 65.00,686.60" fill="#00a3a3" fill-opacity="0.10"/><polygon points="65.00,679.80 442.00,679.80 442.00,683.00 65.00,683.00" fill="#cf6565" fill-opacity="0.10"/><polygon points="65.00,677.80 442.00,677.80 442.00,679.80 65.00,679.80" fill="#d2d200" fill-opacity="0.10"/><polygon points="65.00,621.70 442.00,621.70 442.00,677.80 65.00,677.80" fill="#666666" fill-opacity="0.10"/><polygon points="65.00,602.90 442.00,602.90 442.00,621.70 65.00,621.70" fill="#0ba4d8" fill-opacity="0.10"/><polygon points="65.00,597.40 442.00,597.40 442.00,602.90 65.00,602.90" fill="#2e7129" fill-opacity="0.10"/><polygon points="65.00,587.80 442.00,587.80 442.00,597.40 65.00,597.40" fill="#f28e0a" fill-opacity="0.10"/><polygon points="65.00,571.90 442.00,571.90 442.00,587.80 65.00,587.80" fill="#0c3a8c" fill-opacity="0.10"/><polygon points="65.00,560.00 442.00,560.00 442.00,571.90 65.00,571.90" fill="#5aac10" fill-opacity="0.10"/><polygon points="65.00,551.40 442.00,551.40 442.00,560.00 65.00,560.00" fill="#da005e" fill-opacity="0.10"/><polyline points="65.00,683.00 442.00,683.00 443.80,686.80 616.00,686.80" fill="none" stroke="#00a3a3" stroke-opacity="0.78" stroke-width="1.60" stroke-linejoin="round"/><polyline points="65.00,679.80 442.00,679.80 443.80,686.80 616.00,686.80" fill="none" stroke="#cf6565" stroke-opacity="0.78" stroke-width="1.60" stroke-linejoin="round"/><polyline points="65.00,677.80 442.00,677.80 443.80,686.80 616.00,686.80" fill="none" stroke="#d2d200" stroke-opacity="0.78" stroke-width="1.60" stroke-linejoin="round"/><polyline points="65.00,621.70 442.00,621.70 443.80,686.80 616.00,686.80" fill="none" stroke="#666666" stroke-opacity="0.78" stroke-width="1.60" stroke-linejoin="round"/><polyline points="65.00,602.90 442.00,602.90 443.80,686.80 616.00,686.80" fill="none" stroke="#0ba4d8" stroke-opacity="0.78" stroke-width="1.60" stroke-linejoin="round"/><polyline points="65.00,597.40 442.00,597.40 443.80,686.80 616.00,686.80" fill="none" stroke="#2e7129" stroke-opacity="0.78" stroke-width="1.60" stroke-linejoin="round"/><polyline points="65.00,587.80 442.00,587.80 443.80,686.80 616.00,686.80" fill="none" stroke="#f28e0a" stroke-opacity="0.78" stroke-width="1.60" stroke-linejoin="round"/><polyline points="65.00,571.90 442.00,571.90 443.80,686.80 616.00,686.80" fill="none" stroke="#0c3a8c" stroke-opacity="0.78" stroke-width="1.60" stroke-linejoin="round"/><polyline points="65.00,560.00 442.00,560.00 443.80,686.80 616.00,686.80" fill="none" stroke="#5aac10" stroke-opacity="0.78" stroke-width="1.60" stroke-linejoin="round"/><polyline points="65.00,551.40 442.00,551.40 443.80,686.80 616.00,686.80" fill="none" stroke="#da005e" stroke-opacity="0.78" stroke-width="1.60" stroke-linejoin="round"/></svg><div class="t" style="left:32.83px;top:524.00px;font-size:13.7px;line-height:13.7px;color:#444;transform:scaleX(0.9708);">250</div><div class="t" style="left:32.83px;top:556.00px;font-size:13.7px;line-height:13.7px;color:#444;transform:scaleX(0.9708);">200</div><div class="t" style="left:32.83px;top:587.00px;font-size:13.7px;line-height:13.7px;color:#444;transform:scaleX(0.9708);">150</div><div class="t" style="left:32.83px;top:618.00px;font-size:13.7px;line-height:13.7px;color:#444;transform:scaleX(0.9708);">100</div><div class="t" style="left:40.22px;top:649.00px;font-size:13.7px;line-height:13.7px;color:#444;transform:scaleX(0.9708);">50</div><div class="t" style="left:47.61px;top:680.00px;font-size:13.7px;line-height:13.7px;color:#444;transform:scaleX(0.9708);">0</div><div class="t" style="left:43.90px;top:702.00px;font-size:14.0px;line-height:14.0px;color:#444;transform:scaleX(0.9420);">00:00</div><div class="t" style="left:136.96px;top:702.00px;font-size:14.0px;line-height:14.0px;color:#444;transform:scaleX(0.9420);">04:00</div><div class="t" style="left:230.02px;top:702.00px;font-size:14.0px;line-height:14.0px;color:#444;transform:scaleX(0.9420);">08:00</div><div class="t" style="left:323.08px;top:702.00px;font-size:14.0px;line-height:14.0px;color:#444;transform:scaleX(0.9420);">12:00</div><div class="t" style="left:416.14px;top:702.00px;font-size:14.0px;line-height:14.0px;color:#444;transform:scaleX(0.9420);">16:00</div><div class="t" style="left:509.20px;top:702.00px;font-size:14.0px;line-height:14.0px;color:#444;transform:scaleX(0.9420);">20:00</div><div class="t" style="left:-23.30px;top:602.10px;font-size:13px;line-height:13px;color:#000;transform:rotate(-90deg);transform-origin:50% 50%;width:90px;text-align:center">bytes / sec</div><div class="a" style="left:66.00px;top:535.60px;width:112.00px;height:192.00px;background:rgba(255,255,255,0.85);"></div><div class="a" style="left:70.00px;top:539.00px;width:12.00px;height:12.00px;background:#00a3a3;"></div><div class="t" style="left:84.40px;top:540.00px;font-size:13.9px;line-height:13.9px;color:#333;transform:scaleX(0.9781);">172.16.133.6</div><div class="a" style="left:70.00px;top:558.00px;width:12.00px;height:12.00px;background:#cf6565;"></div><div class="t" style="left:84.40px;top:559.00px;font-size:13.9px;line-height:13.9px;color:#333;transform:scaleX(0.9781);">172.16.128.169</div><div class="a" style="left:70.00px;top:577.00px;width:12.00px;height:12.00px;background:#d2d200;"></div><div class="t" style="left:84.40px;top:578.00px;font-size:13.9px;line-height:13.9px;color:#333;transform:scaleX(0.9781);">8.8.8.8</div><div class="a" style="left:70.00px;top:596.00px;width:12.00px;height:12.00px;background:#666666;"></div><div class="t" style="left:84.40px;top:597.00px;font-size:13.9px;line-height:13.9px;color:#333;transform:scaleX(0.9781);">172.16.133.116</div><div class="a" style="left:70.00px;top:615.00px;width:12.00px;height:12.00px;background:#0ba4d8;"></div><div class="t" style="left:84.40px;top:616.00px;font-size:13.9px;line-height:13.9px;color:#333;transform:scaleX(0.9781);">172.16.133.41</div><div class="a" style="left:70.00px;top:634.00px;width:12.00px;height:12.00px;background:#2e7129;"></div><div class="t" style="left:84.40px;top:635.00px;font-size:13.9px;line-height:13.9px;color:#333;transform:scaleX(0.9781);">172.16.133.109</div><div class="a" style="left:70.00px;top:653.00px;width:12.00px;height:12.00px;background:#f28e0a;"></div><div class="t" style="left:84.40px;top:654.00px;font-size:13.9px;line-height:13.9px;color:#333;transform:scaleX(0.9781);">172.16.133.66</div><div class="a" style="left:70.00px;top:672.00px;width:12.00px;height:12.00px;background:#0c3a8c;"></div><div class="t" style="left:84.40px;top:673.00px;font-size:13.9px;line-height:13.9px;color:#333;transform:scaleX(0.9781);">172.16.133.54</div><div class="a" style="left:70.00px;top:691.00px;width:12.00px;height:12.00px;background:#5aac10;"></div><div class="t" style="left:84.40px;top:692.00px;font-size:13.9px;line-height:13.9px;color:#333;transform:scaleX(0.9781);">172.16.133.78</div><div class="a" style="left:70.00px;top:710.00px;width:12.00px;height:12.00px;background:#da005e;"></div><div class="t" style="left:84.40px;top:711.00px;font-size:13.9px;line-height:13.9px;color:#333;transform:scaleX(0.9781);">172.16.133.93</div><svg class="a" style="left:691px;top:526px" width="565" height="171" viewBox="691 526 565 171"><line x1="693.60" y1="530.50" x2="1249.70" y2="530.50" stroke="#dedede" stroke-width="1"/><line x1="693.60" y1="569.50" x2="1249.70" y2="569.50" stroke="#dedede" stroke-width="1"/><line x1="693.60" y1="608.50" x2="1249.70" y2="608.50" stroke="#dedede" stroke-width="1"/><line x1="693.60" y1="647.50" x2="1249.70" y2="647.50" stroke="#dedede" stroke-width="1"/><line x1="693.60" y1="686.50" x2="1249.70" y2="686.50" stroke="#dedede" stroke-width="1"/><line x1="693.60" y1="686.80" x2="693.60" y2="692.80" stroke="#d6d6d6" stroke-width="1.2"/><line x1="786.50" y1="686.80" x2="786.50" y2="692.80" stroke="#d6d6d6" stroke-width="1.2"/><line x1="879.40" y1="686.80" x2="879.40" y2="692.80" stroke="#d6d6d6" stroke-width="1.2"/><line x1="972.30" y1="686.80" x2="972.30" y2="692.80" stroke="#d6d6d6" stroke-width="1.2"/><line x1="1065.20" y1="686.80" x2="1065.20" y2="692.80" stroke="#d6d6d6" stroke-width="1.2"/><line x1="1158.10" y1="686.80" x2="1158.10" y2="692.80" stroke="#d6d6d6" stroke-width="1.2"/><polygon points="696.60,643.30 1073.60,643.30 1073.60,686.80 696.60,686.80" fill="#00a3a3" fill-opacity="0.10"/><polygon points="696.60,624.80 1073.60,624.80 1073.60,643.30 696.60,643.30" fill="#cf6565" fill-opacity="0.10"/><polygon points="696.60,624.20 1073.60,624.20 1073.60,624.80 696.60,624.80" fill="#d2d200" fill-opacity="0.10"/><polygon points="696.60,623.10 1073.60,623.10 1073.60,624.20 696.60,624.20" fill="#666666" fill-opacity="0.10"/><polygon points="696.60,608.80 1073.60,608.80 1073.60,623.10 696.60,623.10" fill="#0ba4d8" fill-opacity="0.10"/><polygon points="696.60,608.30 1073.60,608.30 1073.60,608.80 696.60,608.80" fill="#2e7129" fill-opacity="0.10"/><polygon points="696.60,579.40 1073.60,579.40 1073.60,608.30 696.60,608.30" fill="#f28e0a" fill-opacity="0.10"/><polygon points="696.60,566.20 1073.60,566.20 1073.60,579.40 696.60,579.40" fill="#0c3a8c" fill-opacity="0.10"/><polygon points="696.60,565.50 1073.60,565.50 1073.60,566.20 696.60,566.20" fill="#5aac10" fill-opacity="0.10"/><polygon points="696.60,558.20 1073.60,558.20 1073.60,565.50 696.60,565.50" fill="#da005e" fill-opacity="0.10"/><polyline points="696.60,643.30 1073.60,643.30 1075.40,687.00 1247.70,687.00" fill="none" stroke="#00a3a3" stroke-opacity="0.78" stroke-width="1.60" stroke-linejoin="round"/><polyline points="696.60,624.80 1073.60,624.80 1075.40,687.00 1247.70,687.00" fill="none" stroke="#cf6565" stroke-opacity="0.78" stroke-width="1.60" stroke-linejoin="round"/><polyline points="696.60,624.20 1073.60,624.20 1075.40,687.00 1247.70,687.00" fill="none" stroke="#d2d200" stroke-opacity="0.78" stroke-width="1.60" stroke-linejoin="round"/><polyline points="696.60,623.10 1073.60,623.10 1075.40,687.00 1247.70,687.00" fill="none" stroke="#666666" stroke-opacity="0.78" stroke-width="1.60" stroke-linejoin="round"/><polyline points="696.60,608.80 1073.60,608.80 1075.40,687.00 1247.70,687.00" fill="none" stroke="#0ba4d8" stroke-opacity="0.78" stroke-width="1.60" stroke-linejoin="round"/><polyline points="696.60,608.30 1073.60,608.30 1075.40,687.00 1247.70,687.00" fill="none" stroke="#2e7129" stroke-opacity="0.78" stroke-width="1.60" stroke-linejoin="round"/><polyline points="696.60,579.40 1073.60,579.40 1075.40,687.00 1247.70,687.00" fill="none" stroke="#f28e0a" stroke-opacity="0.78" stroke-width="1.60" stroke-linejoin="round"/><polyline points="696.60,566.20 1073.60,566.20 1075.40,687.00 1247.70,687.00" fill="none" stroke="#0c3a8c" stroke-opacity="0.78" stroke-width="1.60" stroke-linejoin="round"/><polyline points="696.60,565.50 1073.60,565.50 1075.40,687.00 1247.70,687.00" fill="none" stroke="#5aac10" stroke-opacity="0.78" stroke-width="1.60" stroke-linejoin="round"/><polyline points="696.60,558.20 1073.60,558.20 1075.40,687.00 1247.70,687.00" fill="none" stroke="#da005e" stroke-opacity="0.78" stroke-width="1.60" stroke-linejoin="round"/></svg><div class="t" style="left:664.83px;top:524.00px;font-size:13.7px;line-height:13.7px;color:#444;transform:scaleX(0.9708);">800</div><div class="t" style="left:664.83px;top:563.00px;font-size:13.7px;line-height:13.7px;color:#444;transform:scaleX(0.9708);">600</div><div class="t" style="left:664.83px;top:602.00px;font-size:13.7px;line-height:13.7px;color:#444;transform:scaleX(0.9708);">400</div><div class="t" style="left:664.83px;top:642.00px;font-size:13.7px;line-height:13.7px;color:#444;transform:scaleX(0.9708);">200</div><div class="t" style="left:679.61px;top:681.00px;font-size:13.7px;line-height:13.7px;color:#444;transform:scaleX(0.9708);">0</div><div class="t" style="left:675.60px;top:702.00px;font-size:14.0px;line-height:14.0px;color:#444;transform:scaleX(0.9420);">00:00</div><div class="t" style="left:768.50px;top:702.00px;font-size:14.0px;line-height:14.0px;color:#444;transform:scaleX(0.9420);">04:00</div><div class="t" style="left:861.40px;top:702.00px;font-size:14.0px;line-height:14.0px;color:#444;transform:scaleX(0.9420);">08:00</div><div class="t" style="left:954.30px;top:702.00px;font-size:14.0px;line-height:14.0px;color:#444;transform:scaleX(0.9420);">12:00</div><div class="t" style="left:1047.20px;top:702.00px;font-size:14.0px;line-height:14.0px;color:#444;transform:scaleX(0.9420);">16:00</div><div class="t" style="left:1140.10px;top:702.00px;font-size:14.0px;line-height:14.0px;color:#444;transform:scaleX(0.9420);">20:00</div><div class="t" style="left:608.30px;top:602.20px;font-size:13px;line-height:13px;color:#000;transform:rotate(-90deg);transform-origin:50% 50%;width:90px;text-align:center">bytes / sec</div><div class="a" style="left:697.60px;top:535.60px;width:112.00px;height:192.00px;background:rgba(255,255,255,0.85);"></div><div class="a" style="left:701.60px;top:539.00px;width:12.00px;height:12.00px;background:#00a3a3;"></div><div class="t" style="left:716.00px;top:540.00px;font-size:13.9px;line-height:13.9px;color:#333;transform:scaleX(0.9781);">172.16.139.250</div><div class="a" style="left:701.60px;top:558.00px;width:12.00px;height:12.00px;background:#cf6565;"></div><div class="t" style="left:716.00px;top:559.00px;font-size:13.9px;line-height:13.9px;color:#333;transform:scaleX(0.9781);">172.16.133.6</div><div class="a" style="left:701.60px;top:577.00px;width:12.00px;height:12.00px;background:#d2d200;"></div><div class="t" style="left:716.00px;top:578.00px;font-size:13.9px;line-height:13.9px;color:#333;transform:scaleX(0.9781);">8.8.8.8</div><div class="a" style="left:701.60px;top:596.00px;width:12.00px;height:12.00px;background:#666666;"></div><div class="t" style="left:716.00px;top:597.00px;font-size:13.9px;line-height:13.9px;color:#333;transform:scaleX(0.9781);">172.16.128.169</div><div class="a" style="left:701.60px;top:615.00px;width:12.00px;height:12.00px;background:#0ba4d8;"></div><div class="t" style="left:716.00px;top:616.00px;font-size:13.9px;line-height:13.9px;color:#333;transform:scaleX(0.9781);">172.16.133.54</div><div class="a" style="left:701.60px;top:634.00px;width:12.00px;height:12.00px;background:#2e7129;"></div><div class="t" style="left:716.00px;top:635.00px;font-size:13.9px;line-height:13.9px;color:#333;transform:scaleX(0.9781);">172.16.128.202</div><div class="a" style="left:701.60px;top:653.00px;width:12.00px;height:12.00px;background:#f28e0a;"></div><div class="t" style="left:716.00px;top:654.00px;font-size:13.9px;line-height:13.9px;color:#333;transform:scaleX(0.9781);">172.16.133.132</div><div class="a" style="left:701.60px;top:672.00px;width:12.00px;height:12.00px;background:#0c3a8c;"></div><div class="t" style="left:716.00px;top:673.00px;font-size:13.9px;line-height:13.9px;color:#333;transform:scaleX(0.9781);">172.16.133.41</div><div class="a" style="left:701.60px;top:691.00px;width:12.00px;height:12.00px;background:#5aac10;"></div><div class="t" style="left:716.00px;top:692.00px;font-size:13.9px;line-height:13.9px;color:#333;transform:scaleX(0.9781);">172.16.133.254</div><div class="a" style="left:701.60px;top:710.00px;width:12.00px;height:12.00px;background:#da005e;"></div><div class="t" style="left:716.00px;top:711.00px;font-size:13.9px;line-height:13.9px;color:#333;transform:scaleX(0.9781);">172.16.133.66</div><div class="t" style="left:12.00px;top:739.00px;font-size:17.9px;line-height:17.9px;color:#6f7b80;transform:scaleX(0.9543);">Netflow: Sources (packets)</div><svg class="a" style="left:613px;top:737px" width="16" height="16" viewBox="613 737 16 16"><polygon points="621.50,738.90 626.30,738.90 626.30,743.70 625.06,742.46 621.95,745.57 620.32,743.94 623.43,740.83" fill="#9ea3a7"/><polygon points="619.50,750.50 614.70,750.50 614.70,745.70 615.94,746.94 619.05,743.83 620.68,745.46 617.57,748.57" fill="#9ea3a7"/></svg><div class="t" style="left:644.30px;top:739.00px;font-size:17.9px;line-height:17.9px;color:#6f7b80;transform:scaleX(0.9936);">Netflow: Destinations (packets)</div><svg class="a" style="left:1245px;top:737px" width="16" height="16" viewBox="1245 737 16 16"><polygon points="1253.50,738.90 1258.30,738.90 1258.30,743.70 1257.06,742.46 1253.95,745.57 1252.32,743.94 1255.43,740.83" fill="#9ea3a7"/><polygon points="1251.50,750.50 1246.70,750.50 1246.70,745.70 1247.94,746.94 1251.05,743.83 1252.68,745.46 1249.57,748.57" fill="#9ea3a7"/></svg><svg class="a" style="left:63px;top:766px" width="561" height="171" viewBox="63 766 561 171"><line x1="65.30" y1="770.50" x2="618.00" y2="770.50" stroke="#dedede" stroke-width="1"/><line x1="65.30" y1="801.50" x2="618.00" y2="801.50" stroke="#dedede" stroke-width="1"/><line x1="65.30" y1="833.50" x2="618.00" y2="833.50" stroke="#dedede" stroke-width="1"/><line x1="65.30" y1="864.50" x2="618.00" y2="864.50" stroke="#dedede" stroke-width="1"/><line x1="65.30" y1="895.50" x2="618.00" y2="895.50" stroke="#dedede" stroke-width="1"/><line x1="65.30" y1="927.50" x2="618.00" y2="927.50" stroke="#dedede" stroke-width="1"/><line x1="65.00" y1="927.00" x2="65.00" y2="933.00" stroke="#d6d6d6" stroke-width="1.2"/><line x1="157.50" y1="927.00" x2="157.50" y2="933.00" stroke="#d6d6d6" stroke-width="1.2"/><line x1="250.00" y1="927.00" x2="250.00" y2="933.00" stroke="#d6d6d6" stroke-width="1.2"/><line x1="342.50" y1="927.00" x2="342.50" y2="933.00" stroke="#d6d6d6" stroke-width="1.2"/><line x1="435.00" y1="927.00" x2="435.00" y2="933.00" stroke="#d6d6d6" stroke-width="1.2"/><line x1="527.50" y1="927.00" x2="527.50" y2="933.00" stroke="#d6d6d6" stroke-width="1.2"/><polygon points="68.30,918.20 442.50,918.20 442.50,927.00 68.30,927.00" fill="#00a3a3" fill-opacity="0.10"/><polygon points="68.30,913.40 442.50,913.40 442.50,918.20 68.30,918.20" fill="#cf6565" fill-opacity="0.10"/><polygon points="68.30,910.40 442.50,910.40 442.50,913.40 68.30,913.40" fill="#d2d200" fill-opacity="0.10"/><polygon points="68.30,877.90 442.50,877.90 442.50,910.40 68.30,910.40" fill="#666666" fill-opacity="0.10"/><polygon points="68.30,861.10 442.50,861.10 442.50,877.90 68.30,877.90" fill="#0ba4d8" fill-opacity="0.10"/><polygon points="68.30,857.40 442.50,857.40 442.50,861.10 68.30,861.10" fill="#2e7129" fill-opacity="0.10"/><polygon points="68.30,844.60 442.50,844.60 442.50,857.40 68.30,857.40" fill="#f28e0a" fill-opacity="0.10"/><polygon points="68.30,831.90 442.50,831.90 442.50,844.60 68.30,844.60" fill="#0c3a8c" fill-opacity="0.10"/><polygon points="68.30,810.60 442.50,810.60 442.50,831.90 68.30,831.90" fill="#5aac10" fill-opacity="0.10"/><polygon points="68.30,795.40 442.50,795.40 442.50,810.60 68.30,810.60" fill="#da005e" fill-opacity="0.10"/><polyline points="68.30,918.20 442.50,918.20 444.30,927.20 616.00,927.20" fill="none" stroke="#00a3a3" stroke-opacity="0.78" stroke-width="1.60" stroke-linejoin="round"/><polyline points="68.30,913.40 442.50,913.40 444.30,927.20 616.00,927.20" fill="none" stroke="#cf6565" stroke-opacity="0.78" stroke-width="1.60" stroke-linejoin="round"/><polyline points="68.30,910.40 442.50,910.40 444.30,927.20 616.00,927.20" fill="none" stroke="#d2d200" stroke-opacity="0.78" stroke-width="1.60" stroke-linejoin="round"/><polyline points="68.30,877.90 442.50,877.90 444.30,927.20 616.00,927.20" fill="none" stroke="#666666" stroke-opacity="0.78" stroke-width="1.60" stroke-linejoin="round"/><polyline points="68.30,861.10 442.50,861.10 444.30,927.20 616.00,927.20" fill="none" stroke="#0ba4d8" stroke-opacity="0.78" stroke-width="1.60" stroke-linejoin="round"/><polyline points="68.30,857.40 442.50,857.40 444.30,927.20 616.00,927.20" fill="none" stroke="#2e7129" stroke-opacity="0.78" stroke-width="1.60" stroke-linejoin="round"/><polyline points="68.30,844.60 442.50,844.60 444.30,927.20 616.00,927.20" fill="none" stroke="#f28e0a" stroke-opacity="0.78" stroke-width="1.60" stroke-linejoin="round"/><polyline points="68.30,831.90 442.50,831.90 444.30,927.20 616.00,927.20" fill="none" stroke="#0c3a8c" stroke-opacity="0.78" stroke-width="1.60" stroke-linejoin="round"/><polyline points="68.30,810.60 442.50,810.60 444.30,927.20 616.00,927.20" fill="none" stroke="#5aac10" stroke-opacity="0.78" stroke-width="1.60" stroke-linejoin="round"/><polyline points="68.30,795.40 442.50,795.40 444.30,927.20 616.00,927.20" fill="none" stroke="#da005e" stroke-opacity="0.78" stroke-width="1.60" stroke-linejoin="round"/></svg><div class="t" style="left:32.24px;top:764.00px;font-size:13.7px;line-height:13.7px;color:#444;transform:scaleX(0.9708);">1.25</div><div class="t" style="left:32.24px;top:796.00px;font-size:13.7px;line-height:13.7px;color:#444;transform:scaleX(0.9708);">1.00</div><div class="t" style="left:32.24px;top:827.00px;font-size:13.7px;line-height:13.7px;color:#444;transform:scaleX(0.9708);">0.75</div><div class="t" style="left:32.24px;top:858.00px;font-size:13.7px;line-height:13.7px;color:#444;transform:scaleX(0.9708);">0.50</div><div class="t" style="left:32.24px;top:890.00px;font-size:13.7px;line-height:13.7px;color:#444;transform:scaleX(0.9708);">0.25</div><div class="t" style="left:32.24px;top:921.00px;font-size:13.7px;line-height:13.7px;color:#444;transform:scaleX(0.9708);">0.00</div><div class="t" style="left:47.00px;top:942.00px;font-size:14.0px;line-height:14.0px;color:#444;transform:scaleX(0.9420);">00:00</div><div class="t" style="left:139.50px;top:942.00px;font-size:14.0px;line-height:14.0px;color:#444;transform:scaleX(0.9420);">04:00</div><div class="t" style="left:232.00px;top:942.00px;font-size:14.0px;line-height:14.0px;color:#444;transform:scaleX(0.9420);">08:00</div><div class="t" style="left:324.50px;top:942.00px;font-size:14.0px;line-height:14.0px;color:#444;transform:scaleX(0.9420);">12:00</div><div class="t" style="left:417.00px;top:942.00px;font-size:14.0px;line-height:14.0px;color:#444;transform:scaleX(0.9420);">16:00</div><div class="t" style="left:509.50px;top:942.00px;font-size:14.0px;line-height:14.0px;color:#444;transform:scaleX(0.9420);">20:00</div><div class="t" style="left:-23.30px;top:842.35px;font-size:13px;line-height:13px;color:#000;transform:rotate(-90deg);transform-origin:50% 50%;width:90px;text-align:center">packets / sec</div><div class="a" style="left:69.20px;top:775.70px;width:112.00px;height:192.00px;background:rgba(255,255,255,0.85);"></div><div class="a" style="left:73.20px;top:779.10px;width:12.00px;height:12.00px;background:#00a3a3;"></div><div class="t" style="left:87.60px;top:780.00px;font-size:13.9px;line-height:13.9px;color:#333;transform:scaleX(0.9781);">172.16.133.6</div><div class="a" style="left:73.20px;top:798.10px;width:12.00px;height:12.00px;background:#cf6565;"></div><div class="t" style="left:87.60px;top:799.00px;font-size:13.9px;line-height:13.9px;color:#333;transform:scaleX(0.9781);">172.16.128.169</div><div class="a" style="left:73.20px;top:817.10px;width:12.00px;height:12.00px;background:#d2d200;"></div><div class="t" style="left:87.60px;top:818.00px;font-size:13.9px;line-height:13.9px;color:#333;transform:scaleX(0.9781);">8.8.8.8</div><div class="a" style="left:73.20px;top:836.10px;width:12.00px;height:12.00px;background:#666666;"></div><div class="t" style="left:87.60px;top:837.00px;font-size:13.9px;line-height:13.9px;color:#333;transform:scaleX(0.9781);">172.16.133.116</div><div class="a" style="left:73.20px;top:855.10px;width:12.00px;height:12.00px;background:#0ba4d8;"></div><div class="t" style="left:87.60px;top:856.00px;font-size:13.9px;line-height:13.9px;color:#333;transform:scaleX(0.9781);">172.16.133.41</div><div class="a" style="left:73.20px;top:874.10px;width:12.00px;height:12.00px;background:#2e7129;"></div><div class="t" style="left:87.60px;top:875.00px;font-size:13.9px;line-height:13.9px;color:#333;transform:scaleX(0.9781);">172.16.133.109</div><div class="a" style="left:73.20px;top:893.10px;width:12.00px;height:12.00px;background:#f28e0a;"></div><div class="t" style="left:87.60px;top:894.00px;font-size:13.9px;line-height:13.9px;color:#333;transform:scaleX(0.9781);">172.16.133.66</div><div class="a" style="left:73.20px;top:912.10px;width:12.00px;height:12.00px;background:#0c3a8c;"></div><div class="t" style="left:87.60px;top:913.00px;font-size:13.9px;line-height:13.9px;color:#333;transform:scaleX(0.9781);">172.16.133.54</div><div class="a" style="left:73.20px;top:931.10px;width:12.00px;height:12.00px;background:#5aac10;"></div><div class="t" style="left:87.60px;top:932.00px;font-size:13.9px;line-height:13.9px;color:#333;transform:scaleX(0.9781);">172.16.133.78</div><div class="a" style="left:73.20px;top:950.10px;width:12.00px;height:12.00px;background:#da005e;"></div><div class="t" style="left:87.60px;top:951.00px;font-size:13.9px;line-height:13.9px;color:#333;transform:scaleX(0.9781);">172.16.133.93</div><svg class="a" style="left:688px;top:766px" width="568" height="171" viewBox="688 766 568 171"><line x1="690.30" y1="770.50" x2="1249.70" y2="770.50" stroke="#dedede" stroke-width="1"/><line x1="690.30" y1="809.50" x2="1249.70" y2="809.50" stroke="#dedede" stroke-width="1"/><line x1="690.30" y1="848.50" x2="1249.70" y2="848.50" stroke="#dedede" stroke-width="1"/><line x1="690.30" y1="887.50" x2="1249.70" y2="887.50" stroke="#dedede" stroke-width="1"/><line x1="690.30" y1="927.50" x2="1249.70" y2="927.50" stroke="#dedede" stroke-width="1"/><line x1="690.30" y1="927.00" x2="690.30" y2="933.00" stroke="#d6d6d6" stroke-width="1.2"/><line x1="783.80" y1="927.00" x2="783.80" y2="933.00" stroke="#d6d6d6" stroke-width="1.2"/><line x1="877.30" y1="927.00" x2="877.30" y2="933.00" stroke="#d6d6d6" stroke-width="1.2"/><line x1="970.80" y1="927.00" x2="970.80" y2="933.00" stroke="#d6d6d6" stroke-width="1.2"/><line x1="1064.30" y1="927.00" x2="1064.30" y2="933.00" stroke="#d6d6d6" stroke-width="1.2"/><line x1="1157.80" y1="927.00" x2="1157.80" y2="933.00" stroke="#d6d6d6" stroke-width="1.2"/><polygon points="693.30,834.20 1072.10,834.20 1072.10,927.00 693.30,927.00" fill="#00a3a3" fill-opacity="0.10"/><polygon points="693.30,830.00 1072.10,830.00 1072.10,834.20 693.30,834.20" fill="#cf6565" fill-opacity="0.10"/><polygon points="693.30,828.80 1072.10,828.80 1072.10,830.00 693.30,830.00" fill="#d2d200" fill-opacity="0.10"/><polygon points="693.30,827.00 1072.10,827.00 1072.10,828.80 693.30,828.80" fill="#666666" fill-opacity="0.10"/><polygon points="693.30,823.00 1072.10,823.00 1072.10,827.00 693.30,827.00" fill="#0ba4d8" fill-opacity="0.10"/><polygon points="693.30,822.80 1072.10,822.80 1072.10,823.00 693.30,823.00" fill="#2e7129" fill-opacity="0.10"/><polygon points="693.30,817.00 1072.10,817.00 1072.10,822.80 693.30,822.80" fill="#f28e0a" fill-opacity="0.10"/><polygon points="693.30,812.90 1072.10,812.90 1072.10,817.00 693.30,817.00" fill="#0c3a8c" fill-opacity="0.10"/><polygon points="693.30,812.80 1072.10,812.80 1072.10,812.90 693.30,812.90" fill="#5aac10" fill-opacity="0.10"/><polygon points="693.30,810.50 1072.10,810.50 1072.10,812.80 693.30,812.80" fill="#da005e" fill-opacity="0.10"/><polyline points="693.30,834.20 1072.10,834.20 1073.90,927.20 1247.70,927.20" fill="none" stroke="#00a3a3" stroke-opacity="0.78" stroke-width="1.60" stroke-linejoin="round"/><polyline points="693.30,830.00 1072.10,830.00 1073.90,927.20 1247.70,927.20" fill="none" stroke="#cf6565" stroke-opacity="0.78" stroke-width="1.60" stroke-linejoin="round"/><polyline points="693.30,828.80 1072.10,828.80 1073.90,927.20 1247.70,927.20" fill="none" stroke="#d2d200" stroke-opacity="0.78" stroke-width="1.60" stroke-linejoin="round"/><polyline points="693.30,827.00 1072.10,827.00 1073.90,927.20 1247.70,927.20" fill="none" stroke="#666666" stroke-opacity="0.78" stroke-width="1.60" stroke-linejoin="round"/><polyline points="693.30,823.00 1072.10,823.00 1073.90,927.20 1247.70,927.20" fill="none" stroke="#0ba4d8" stroke-opacity="0.78" stroke-width="1.60" stroke-linejoin="round"/><polyline points="693.30,822.80 1072.10,822.80 1073.90,927.20 1247.70,927.20" fill="none" stroke="#2e7129" stroke-opacity="0.78" stroke-width="1.60" stroke-linejoin="round"/><polyline points="693.30,817.00 1072.10,817.00 1073.90,927.20 1247.70,927.20" fill="none" stroke="#f28e0a" stroke-opacity="0.78" stroke-width="1.60" stroke-linejoin="round"/><polyline points="693.30,812.90 1072.10,812.90 1073.90,927.20 1247.70,927.20" fill="none" stroke="#0c3a8c" stroke-opacity="0.78" stroke-width="1.60" stroke-linejoin="round"/><polyline points="693.30,812.80 1072.10,812.80 1073.90,927.20 1247.70,927.20" fill="none" stroke="#5aac10" stroke-opacity="0.78" stroke-width="1.60" stroke-linejoin="round"/><polyline points="693.30,810.50 1072.10,810.50 1073.90,927.20 1247.70,927.20" fill="none" stroke="#da005e" stroke-opacity="0.78" stroke-width="1.60" stroke-linejoin="round"/></svg><div class="t" style="left:665.53px;top:764.00px;font-size:13.7px;line-height:13.7px;color:#444;transform:scaleX(0.9708);">4.0</div><div class="t" style="left:665.53px;top:804.00px;font-size:13.7px;line-height:13.7px;color:#444;transform:scaleX(0.9708);">3.0</div><div class="t" style="left:665.53px;top:843.00px;font-size:13.7px;line-height:13.7px;color:#444;transform:scaleX(0.9708);">2.0</div><div class="t" style="left:665.53px;top:882.00px;font-size:13.7px;line-height:13.7px;color:#444;transform:scaleX(0.9708);">1.0</div><div class="t" style="left:665.53px;top:921.00px;font-size:13.7px;line-height:13.7px;color:#444;transform:scaleX(0.9708);">0.0</div><div class="t" style="left:672.30px;top:942.00px;font-size:14.0px;line-height:14.0px;color:#444;transform:scaleX(0.9420);">00:00</div><div class="t" style="left:765.80px;top:942.00px;font-size:14.0px;line-height:14.0px;color:#444;transform:scaleX(0.9420);">04:00</div><div class="t" style="left:859.30px;top:942.00px;font-size:14.0px;line-height:14.0px;color:#444;transform:scaleX(0.9420);">08:00</div><div class="t" style="left:952.80px;top:942.00px;font-size:14.0px;line-height:14.0px;color:#444;transform:scaleX(0.9420);">12:00</div><div class="t" style="left:1046.30px;top:942.00px;font-size:14.0px;line-height:14.0px;color:#444;transform:scaleX(0.9420);">16:00</div><div class="t" style="left:1139.80px;top:942.00px;font-size:14.0px;line-height:14.0px;color:#444;transform:scaleX(0.9420);">20:00</div><div class="t" style="left:608.30px;top:842.35px;font-size:13px;line-height:13px;color:#000;transform:rotate(-90deg);transform-origin:50% 50%;width:90px;text-align:center">packets / sec</div><div class="a" style="left:694.20px;top:775.70px;width:112.00px;height:192.00px;background:rgba(255,255,255,0.85);"></div><div class="a" style="left:698.20px;top:779.10px;width:12.00px;height:12.00px;background:#00a3a3;"></div><div class="t" style="left:712.60px;top:780.00px;font-size:13.9px;line-height:13.9px;color:#333;transform:scaleX(0.9781);">172.16.139.250</div><div class="a" style="left:698.20px;top:798.10px;width:12.00px;height:12.00px;background:#cf6565;"></div><div class="t" style="left:712.60px;top:799.00px;font-size:13.9px;line-height:13.9px;color:#333;transform:scaleX(0.9781);">172.16.133.6</div><div class="a" style="left:698.20px;top:817.10px;width:12.00px;height:12.00px;background:#d2d200;"></div><div class="t" style="left:712.60px;top:818.00px;font-size:13.9px;line-height:13.9px;color:#333;transform:scaleX(0.9781);">8.8.8.8</div><div class="a" style="left:698.20px;top:836.10px;width:12.00px;height:12.00px;background:#666666;"></div><div class="t" style="left:712.60px;top:837.00px;font-size:13.9px;line-height:13.9px;color:#333;transform:scaleX(0.9781);">172.16.128.169</div><div class="a" style="left:698.20px;top:855.10px;width:12.00px;height:12.00px;background:#0ba4d8;"></div><div class="t" style="left:712.60px;top:856.00px;font-size:13.9px;line-height:13.9px;color:#333;transform:scaleX(0.9781);">172.16.133.54</div><div class="a" style="left:698.20px;top:874.10px;width:12.00px;height:12.00px;background:#2e7129;"></div><div class="t" style="left:712.60px;top:875.00px;font-size:13.9px;line-height:13.9px;color:#333;transform:scaleX(0.9781);">172.16.128.202</div><div class="a" style="left:698.20px;top:893.10px;width:12.00px;height:12.00px;background:#f28e0a;"></div><div class="t" style="left:712.60px;top:894.00px;font-size:13.9px;line-height:13.9px;color:#333;transform:scaleX(0.9781);">172.16.133.132</div><div class="a" style="left:698.20px;top:912.10px;width:12.00px;height:12.00px;background:#0c3a8c;"></div><div class="t" style="left:712.60px;top:913.00px;font-size:13.9px;line-height:13.9px;color:#333;transform:scaleX(0.9781);">172.16.133.41</div><div class="a" style="left:698.20px;top:931.10px;width:12.00px;height:12.00px;background:#5aac10;"></div><div class="t" style="left:712.60px;top:932.00px;font-size:13.9px;line-height:13.9px;color:#333;transform:scaleX(0.9781);">172.16.133.254</div><div class="a" style="left:698.20px;top:950.10px;width:12.00px;height:12.00px;background:#da005e;"></div><div class="t" style="left:712.60px;top:951.00px;font-size:13.9px;line-height:13.9px;color:#333;transform:scaleX(0.9781);">172.16.133.66</div><div class="t" style="left:12.00px;top:979.00px;font-size:17.9px;line-height:17.9px;color:#6f7b80;transform:scaleX(0.9692);">Netflow: Source Ports (bytes)</div><svg class="a" style="left:402px;top:977px" width="16" height="16" viewBox="402 977 16 16"><polygon points="410.50,978.90 415.30,978.90 415.30,983.70 414.06,982.46 410.95,985.57 409.32,983.94 412.43,980.83" fill="#9ea3a7"/><polygon points="408.50,990.50 403.70,990.50 403.70,985.70 404.94,986.94 408.05,983.83 409.68,985.46 406.57,988.57" fill="#9ea3a7"/></svg><div class="t" style="left:433.50px;top:979.00px;font-size:17.9px;line-height:17.9px;color:#6f7b80;transform:scaleX(0.9854);">Netflow: Source Por...</div><svg class="a" style="left:613px;top:977px" width="16" height="16" viewBox="613 977 16 16"><polygon points="621.50,978.90 626.30,978.90 626.30,983.70 625.06,982.46 621.95,985.57 620.32,983.94 623.43,980.83" fill="#9ea3a7"/><polygon points="619.50,990.50 614.70,990.50 614.70,985.70 615.94,986.94 619.05,983.83 620.68,985.46 617.57,988.57" fill="#9ea3a7"/></svg><div class="t" style="left:644.30px;top:979.00px;font-size:17.9px;line-height:17.9px;color:#6f7b80;">Netflow: Destination Ports (bytes)</div><svg class="a" style="left:1035px;top:977px" width="16" height="16" viewBox="1035 977 16 16"><polygon points="1043.50,978.90 1048.30,978.90 1048.30,983.70 1047.06,982.46 1043.95,985.57 1042.32,983.94 1045.43,980.83" fill="#9ea3a7"/><polygon points="1041.50,990.50 1036.70,990.50 1036.70,985.70 1037.94,986.94 1041.05,983.83 1042.68,985.46 1039.57,988.57" fill="#9ea3a7"/></svg><div class="t" style="left:1065.90px;top:979.00px;font-size:17.9px;line-height:17.9px;color:#6f7b80;transform:scaleX(0.9884);">Netflow: Destination...</div><svg class="a" style="left:1245px;top:977px" width="16" height="16" viewBox="1245 977 16 16"><polygon points="1253.50,978.90 1258.30,978.90 1258.30,983.70 1257.06,982.46 1253.95,985.57 1252.32,983.94 1255.43,980.83" fill="#9ea3a7"/><polygon points="1251.50,990.50 1246.70,990.50 1246.70,985.70 1247.94,986.94 1251.05,983.83 1252.68,985.46 1249.57,988.57" fill="#9ea3a7"/></svg><svg class="a" style="left:25px;top:1018px" width="172" height="172" viewBox="25 1018 172 172"><path d="M110.80 1020.60 A83.30 83.30 0 0 1 170.82 1161.66 L154.03 1145.50 A60.00 60.00 0 0 0 110.80 1043.90 Z" fill="#3bbf8c" stroke="#fff" stroke-width="1.50"/><path d="M170.82 1161.66 A83.30 83.30 0 0 1 52.00 1162.90 L68.45 1146.40 A60.00 60.00 0 0 0 154.03 1145.50 Z" fill="#b2bc33" stroke="#fff" stroke-width="1.50"/><path d="M52.00 1162.90 A83.30 83.30 0 0 1 30.45 1125.88 L52.93 1119.73 A60.00 60.00 0 0 0 68.45 1146.40 Z" fill="#5039c3" stroke="#fff" stroke-width="1.50"/><path d="M30.45 1125.88 A83.30 83.30 0 0 1 30.05 1083.47 L52.63 1089.18 A60.00 60.00 0 0 0 52.93 1119.73 Z" fill="#c36f3a" stroke="#fff" stroke-width="1.50"/><path d="M30.05 1083.47 A83.30 83.30 0 0 1 37.94 1063.52 L58.32 1074.81 A60.00 60.00 0 0 0 52.63 1089.18 Z" fill="#3c8fc3" stroke="#fff" stroke-width="1.50"/><path d="M37.94 1063.52 A83.30 83.30 0 0 1 45.70 1051.93 L63.91 1066.47 A60.00 60.00 0 0 0 58.32 1074.81 Z" fill="#45c13a" stroke="#fff" stroke-width="1.50"/><path d="M45.70 1051.93 A83.30 83.30 0 0 1 53.46 1043.48 L69.50 1060.38 A60.00 60.00 0 0 0 63.91 1066.47 Z" fill="#b23ac3" stroke="#fff" stroke-width="1.50"/><path d="M53.46 1043.48 A83.30 83.30 0 0 1 60.21 1037.73 L74.36 1056.24 A60.00 60.00 0 0 0 69.50 1060.38 Z" fill="#c13aa5" stroke="#fff" stroke-width="1.50"/><path d="M60.21 1037.73 A83.30 83.30 0 0 1 62.96 1035.70 L76.34 1054.78 A60.00 60.00 0 0 0 74.36 1056.24 Z" fill="#45c13a" stroke="#fff" stroke-width="1.10"/><path d="M62.96 1035.70 A83.30 83.30 0 0 1 65.52 1033.98 L78.18 1053.54 A60.00 60.00 0 0 0 76.34 1054.78 Z" fill="#c39a3a" stroke="#fff" stroke-width="1.10"/><path d="M65.52 1033.98 A83.30 83.30 0 0 1 67.87 1032.52 L79.88 1052.48 A60.00 60.00 0 0 0 78.18 1053.54 Z" fill="#3a5ac3" stroke="#fff" stroke-width="1.10"/><path d="M67.87 1032.52 A83.30 83.30 0 0 1 70.02 1031.26 L81.43 1051.58 A60.00 60.00 0 0 0 79.88 1052.48 Z" fill="#c33a4a" stroke="#fff" stroke-width="1.10"/><path d="M70.02 1031.26 A83.30 83.30 0 0 1 71.99 1030.19 L82.85 1050.81 A60.00 60.00 0 0 0 81.43 1051.58 Z" fill="#3ac3b0" stroke="#fff" stroke-width="1.10"/><path d="M71.99 1030.19 A83.30 83.30 0 0 1 73.79 1029.27 L84.14 1050.15 A60.00 60.00 0 0 0 82.85 1050.81 Z" fill="#8ac33a" stroke="#fff" stroke-width="1.10"/><path d="M73.79 1029.27 A83.30 83.30 0 0 1 75.43 1028.48 L85.32 1049.58 A60.00 60.00 0 0 0 84.14 1050.15 Z" fill="#6a3ac3" stroke="#fff" stroke-width="1.10"/><path d="M75.43 1028.48 A83.30 83.30 0 0 1 76.92 1027.80 L86.40 1049.09 A60.00 60.00 0 0 0 85.32 1049.58 Z" fill="#c33a80" stroke="#fff" stroke-width="1.10"/><path d="M76.92 1027.80 A83.30 83.30 0 0 1 78.21 1027.24 L87.33 1048.68 A60.00 60.00 0 0 0 86.40 1049.09 Z" fill="#40bf4c" fill-opacity="0.18" stroke="#fff" stroke-width="0.60"/><path d="M78.21 1027.24 A83.30 83.30 0 0 1 79.52 1026.70 L88.27 1048.29 A60.00 60.00 0 0 0 87.33 1048.68 Z" fill="#bf8b40" fill-opacity="0.18" stroke="#fff" stroke-width="0.60"/><path d="M79.52 1026.70 A83.30 83.30 0 0 1 80.83 1026.18 L89.21 1047.92 A60.00 60.00 0 0 0 88.27 1048.29 Z" fill="#4074bf" fill-opacity="0.18" stroke="#fff" stroke-width="0.60"/><path d="M80.83 1026.18 A83.30 83.30 0 0 1 82.15 1025.68 L90.16 1047.56 A60.00 60.00 0 0 0 89.21 1047.92 Z" fill="#bf4054" fill-opacity="0.18" stroke="#fff" stroke-width="0.60"/><path d="M82.15 1025.68 A83.30 83.30 0 0 1 83.48 1025.21 L91.12 1047.22 A60.00 60.00 0 0 0 90.16 1047.56 Z" fill="#40bfab" fill-opacity="0.18" stroke="#fff" stroke-width="0.60"/><path d="M83.48 1025.21 A83.30 83.30 0 0 1 84.82 1024.76 L92.08 1046.89 A60.00 60.00 0 0 0 91.12 1047.22 Z" fill="#93bf40" fill-opacity="0.18" stroke="#fff" stroke-width="0.60"/><path d="M84.82 1024.76 A83.30 83.30 0 0 1 86.16 1024.33 L93.05 1046.58 A60.00 60.00 0 0 0 92.08 1046.89 Z" fill="#6c40bf" fill-opacity="0.18" stroke="#fff" stroke-width="0.60"/><path d="M86.16 1024.33 A83.30 83.30 0 0 1 87.51 1023.92 L94.03 1046.29 A60.00 60.00 0 0 0 93.05 1046.58 Z" fill="#bf4083" fill-opacity="0.18" stroke="#fff" stroke-width="0.60"/><path d="M87.51 1023.92 A83.30 83.30 0 0 1 88.87 1023.54 L95.01 1046.02 A60.00 60.00 0 0 0 94.03 1046.29 Z" fill="#40bf7c" fill-opacity="0.18" stroke="#fff" stroke-width="0.60"/><path d="M88.87 1023.54 A83.30 83.30 0 0 1 90.24 1023.18 L95.99 1045.76 A60.00 60.00 0 0 0 95.01 1046.02 Z" fill="#bfbb40" fill-opacity="0.18" stroke="#fff" stroke-width="0.60"/><path d="M90.24 1023.18 A83.30 83.30 0 0 1 91.61 1022.84 L96.98 1045.51 A60.00 60.00 0 0 0 95.99 1045.76 Z" fill="#4044bf" fill-opacity="0.18" stroke="#fff" stroke-width="0.60"/><path d="M91.61 1022.84 A83.30 83.30 0 0 1 92.98 1022.53 L97.97 1045.29 A60.00 60.00 0 0 0 96.98 1045.51 Z" fill="#bf5c40" fill-opacity="0.18" stroke="#fff" stroke-width="0.60"/><path d="M92.98 1022.53 A83.30 83.30 0 0 1 94.36 1022.24 L98.96 1045.08 A60.00 60.00 0 0 0 97.97 1045.29 Z" fill="#40a3bf" fill-opacity="0.18" stroke="#fff" stroke-width="0.60"/><path d="M94.36 1022.24 A83.30 83.30 0 0 1 95.75 1021.97 L99.96 1044.89 A60.00 60.00 0 0 0 98.96 1045.08 Z" fill="#64bf40" fill-opacity="0.18" stroke="#fff" stroke-width="0.60"/><path d="M95.75 1021.97 A83.30 83.30 0 0 1 97.14 1021.73 L100.96 1044.71 A60.00 60.00 0 0 0 99.96 1044.89 Z" fill="#9b40bf" fill-opacity="0.18" stroke="#fff" stroke-width="0.60"/><path d="M97.14 1021.73 A83.30 83.30 0 0 1 98.54 1021.51 L101.97 1044.55 A60.00 60.00 0 0 0 100.96 1044.71 Z" fill="#bf409b" fill-opacity="0.18" stroke="#fff" stroke-width="0.60"/><path d="M98.54 1021.51 A83.30 83.30 0 0 1 99.93 1021.31 L102.97 1044.41 A60.00 60.00 0 0 0 101.97 1044.55 Z" fill="#40bf64" fill-opacity="0.18" stroke="#fff" stroke-width="0.60"/><path d="M99.93 1021.31 A83.30 83.30 0 0 1 101.33 1021.14 L103.98 1044.29 A60.00 60.00 0 0 0 102.97 1044.41 Z" fill="#bfa340" fill-opacity="0.18" stroke="#fff" stroke-width="0.60"/><path d="M101.33 1021.14 A83.30 83.30 0 0 1 102.74 1020.99 L104.99 1044.18 A60.00 60.00 0 0 0 103.98 1044.29 Z" fill="#405cbf" fill-opacity="0.18" stroke="#fff" stroke-width="0.60"/><path d="M102.74 1020.99 A83.30 83.30 0 0 1 104.14 1020.87 L106.01 1044.09 A60.00 60.00 0 0 0 104.99 1044.18 Z" fill="#bf4440" fill-opacity="0.18" stroke="#fff" stroke-width="0.60"/><path d="M104.14 1020.87 A83.30 83.30 0 0 1 105.55 1020.77 L107.02 1044.02 A60.00 60.00 0 0 0 106.01 1044.09 Z" fill="#40bbbf" fill-opacity="0.18" stroke="#fff" stroke-width="0.60"/><path d="M105.55 1020.77 A83.30 83.30 0 0 1 106.96 1020.69 L108.03 1043.96 A60.00 60.00 0 0 0 107.02 1044.02 Z" fill="#7cbf40" fill-opacity="0.18" stroke="#fff" stroke-width="0.60"/><path d="M106.96 1020.69 A83.30 83.30 0 0 1 108.37 1020.64 L109.05 1043.93 A60.00 60.00 0 0 0 108.03 1043.96 Z" fill="#8340bf" fill-opacity="0.18" stroke="#fff" stroke-width="0.60"/><path d="M108.37 1020.64 A83.30 83.30 0 0 1 109.78 1020.61 L110.07 1043.90 A60.00 60.00 0 0 0 109.05 1043.93 Z" fill="#bf406c" fill-opacity="0.18" stroke="#fff" stroke-width="0.60"/></svg><svg class="a" style="left:657px;top:1018px" width="172" height="172" viewBox="657 1018 172 172"><path d="M743.00 1020.70 A83.30 83.30 0 0 1 826.30 1104.73 L803.00 1104.52 A60.00 60.00 0 0 0 743.00 1044.00 Z" fill="#b2bc33" stroke="#fff" stroke-width="1.50"/><path d="M826.30 1104.73 A83.30 83.30 0 0 1 791.84 1171.48 L778.18 1152.60 A60.00 60.00 0 0 0 803.00 1104.52 Z" fill="#3c8fc3" stroke="#fff" stroke-width="1.50"/><path d="M791.84 1171.48 A83.30 83.30 0 0 1 757.46 1186.03 L753.42 1163.09 A60.00 60.00 0 0 0 778.18 1152.60 Z" fill="#c3513a" stroke="#fff" stroke-width="1.50"/><path d="M757.46 1186.03 A83.30 83.30 0 0 1 730.54 1186.36 L734.03 1163.33 A60.00 60.00 0 0 0 753.42 1163.09 Z" fill="#3bbf8c" stroke="#fff" stroke-width="1.50"/><path d="M730.54 1186.36 A83.30 83.30 0 0 1 713.01 1181.72 L721.40 1159.98 A60.00 60.00 0 0 0 734.03 1163.33 Z" fill="#3aaac3" stroke="#fff" stroke-width="1.50"/><path d="M713.01 1181.72 A83.30 83.30 0 0 1 699.60 1175.10 L711.74 1155.21 A60.00 60.00 0 0 0 721.40 1159.98 Z" fill="#6cc13a" stroke="#fff" stroke-width="1.50"/><path d="M699.60 1175.10 A83.30 83.30 0 0 1 687.69 1166.29 L703.16 1148.87 A60.00 60.00 0 0 0 711.74 1155.21 Z" fill="#8f3ac3" stroke="#fff" stroke-width="1.50"/><path d="M687.69 1166.29 A83.30 83.30 0 0 1 677.63 1155.63 L695.91 1141.19 A60.00 60.00 0 0 0 703.16 1148.87 Z" fill="#c33aa5" stroke="#fff" stroke-width="1.50"/><path d="M677.63 1155.63 A83.30 83.30 0 0 1 671.08 1146.03 L691.20 1134.27 A60.00 60.00 0 0 0 695.91 1141.19 Z" fill="#3ac35a" stroke="#fff" stroke-width="1.50"/><path d="M671.08 1146.03 A83.30 83.30 0 0 1 667.20 1138.54 L688.40 1128.88 A60.00 60.00 0 0 0 691.20 1134.27 Z" fill="#c39a3a" stroke="#fff" stroke-width="1.50"/><path d="M667.20 1138.54 A83.30 83.30 0 0 1 664.24 1131.12 L686.27 1123.53 A60.00 60.00 0 0 0 688.40 1128.88 Z" fill="#c3703a" stroke="#fff" stroke-width="1.50"/><path d="M664.24 1131.12 A83.30 83.30 0 0 1 662.17 1124.15 L684.78 1118.52 A60.00 60.00 0 0 0 686.27 1123.53 Z" fill="#3a5ac3" stroke="#fff" stroke-width="1.50"/><path d="M662.17 1124.15 A83.30 83.30 0 0 1 660.77 1117.32 L683.77 1113.59 A60.00 60.00 0 0 0 684.78 1118.52 Z" fill="#c33a4a" stroke="#fff" stroke-width="1.50"/><path d="M660.77 1117.32 A83.30 83.30 0 0 1 659.98 1110.83 L683.20 1108.92 A60.00 60.00 0 0 0 683.77 1113.59 Z" fill="#3ac3b0" stroke="#fff" stroke-width="1.50"/><path d="M659.98 1110.83 A83.30 83.30 0 0 1 659.70 1104.44 L683.00 1104.31 A60.00 60.00 0 0 0 683.20 1108.92 Z" fill="#8ac33a" stroke="#fff" stroke-width="1.50"/><path d="M659.70 1104.44 A83.30 83.30 0 0 1 659.90 1098.19 L683.15 1099.81 A60.00 60.00 0 0 0 683.00 1104.31 Z" fill="#6a3ac3" stroke="#fff" stroke-width="1.50"/><path d="M659.90 1098.19 A83.30 83.30 0 0 1 660.55 1092.12 L683.61 1095.44 A60.00 60.00 0 0 0 683.15 1099.81 Z" fill="#c33a80" stroke="#fff" stroke-width="1.50"/><path d="M660.55 1092.12 A83.30 83.30 0 0 1 661.58 1086.40 L684.36 1091.32 A60.00 60.00 0 0 0 683.61 1095.44 Z" fill="#3ac37a" stroke="#fff" stroke-width="1.50"/><path d="M661.58 1086.40 A83.30 83.30 0 0 1 662.93 1081.04 L685.32 1087.46 A60.00 60.00 0 0 0 684.36 1091.32 Z" fill="#b8c33a" stroke="#fff" stroke-width="1.50"/><path d="M662.93 1081.04 A83.30 83.30 0 0 1 664.58 1075.92 L686.51 1083.77 A60.00 60.00 0 0 0 685.32 1087.46 Z" fill="#4a3ac3" stroke="#fff" stroke-width="1.50"/><path d="M664.58 1075.92 A83.30 83.30 0 0 1 666.44 1071.18 L687.85 1080.36 A60.00 60.00 0 0 0 686.51 1083.77 Z" fill="#c3683a" stroke="#fff" stroke-width="1.50"/><path d="M666.44 1071.18 A83.30 83.30 0 0 1 668.52 1066.70 L689.35 1077.13 A60.00 60.00 0 0 0 687.85 1080.36 Z" fill="#3a97c3" stroke="#fff" stroke-width="1.50"/><path d="M668.52 1066.70 A83.30 83.30 0 0 1 670.79 1062.48 L690.99 1074.09 A60.00 60.00 0 0 0 689.35 1077.13 Z" fill="#58c33a" stroke="#fff" stroke-width="1.50"/><path d="M670.79 1062.48 A83.30 83.30 0 0 1 673.14 1058.63 L692.68 1071.32 A60.00 60.00 0 0 0 690.99 1074.09 Z" fill="#a73ac3" stroke="#fff" stroke-width="1.50"/><path d="M673.14 1058.63 A83.30 83.30 0 0 1 675.61 1055.04 L694.46 1068.73 A60.00 60.00 0 0 0 692.68 1071.32 Z" fill="#c33ab3" stroke="#fff" stroke-width="1.50"/><path d="M675.61 1055.04 A83.30 83.30 0 0 1 678.17 1051.69 L696.31 1066.32 A60.00 60.00 0 0 0 694.46 1068.73 Z" fill="#3ac34c" stroke="#fff" stroke-width="1.50"/><path d="M678.17 1051.69 A83.30 83.30 0 0 1 680.81 1048.59 L698.20 1064.09 A60.00 60.00 0 0 0 696.31 1066.32 Z" fill="#c38b3a" stroke="#fff" stroke-width="1.50"/><path d="M680.81 1048.59 A83.30 83.30 0 0 1 684.02 1045.17 L700.52 1061.63 A60.00 60.00 0 0 0 698.20 1064.09 Z" fill="#4044bf" stroke="#fff" stroke-width="1.20"/><path d="M684.02 1045.17 A83.30 83.30 0 0 1 687.29 1042.07 L702.87 1059.39 A60.00 60.00 0 0 0 700.52 1061.63 Z" fill="#bf5c40" stroke="#fff" stroke-width="1.20"/><path d="M687.29 1042.07 A83.30 83.30 0 0 1 690.57 1039.27 L705.24 1057.37 A60.00 60.00 0 0 0 702.87 1059.39 Z" fill="#40a3bf" stroke="#fff" stroke-width="1.20"/><path d="M690.57 1039.27 A83.30 83.30 0 0 1 693.86 1036.74 L707.61 1055.55 A60.00 60.00 0 0 0 705.24 1057.37 Z" fill="#64bf40" stroke="#fff" stroke-width="1.20"/><path d="M693.86 1036.74 A83.30 83.30 0 0 1 697.13 1034.46 L709.96 1053.91 A60.00 60.00 0 0 0 707.61 1055.55 Z" fill="#9b40bf" stroke="#fff" stroke-width="1.20"/><path d="M697.13 1034.46 A83.30 83.30 0 0 1 700.37 1032.43 L712.30 1052.45 A60.00 60.00 0 0 0 709.96 1053.91 Z" fill="#bf409b" stroke="#fff" stroke-width="1.20"/><path d="M700.37 1032.43 A83.30 83.30 0 0 1 703.57 1030.62 L714.60 1051.15 A60.00 60.00 0 0 0 712.30 1052.45 Z" fill="#40bf64" stroke="#fff" stroke-width="1.20"/><path d="M703.57 1030.62 A83.30 83.30 0 0 1 706.71 1029.02 L716.86 1049.99 A60.00 60.00 0 0 0 714.60 1051.15 Z" fill="#bfa340" stroke="#fff" stroke-width="1.20"/><path d="M706.71 1029.02 A83.30 83.30 0 0 1 709.78 1027.61 L719.07 1048.98 A60.00 60.00 0 0 0 716.86 1049.99 Z" fill="#405cbf" stroke="#fff" stroke-width="1.20"/><path d="M709.78 1027.61 A83.30 83.30 0 0 1 712.79 1026.37 L721.24 1048.09 A60.00 60.00 0 0 0 719.07 1048.98 Z" fill="#bf4440" stroke="#fff" stroke-width="1.20"/><path d="M712.79 1026.37 A83.30 83.30 0 0 1 715.71 1025.30 L723.34 1047.31 A60.00 60.00 0 0 0 721.24 1048.09 Z" fill="#40bbbf" stroke="#fff" stroke-width="1.20"/><path d="M715.71 1025.30 A83.30 83.30 0 0 1 718.56 1024.37 L725.39 1046.64 A60.00 60.00 0 0 0 723.34 1047.31 Z" fill="#7cbf40" stroke="#fff" stroke-width="1.20"/><path d="M718.56 1024.37 A83.30 83.30 0 0 1 721.32 1023.57 L727.38 1046.07 A60.00 60.00 0 0 0 725.39 1046.64 Z" fill="#8340bf" stroke="#fff" stroke-width="1.20"/><path d="M721.32 1023.57 A83.30 83.30 0 0 1 723.99 1022.90 L729.31 1045.58 A60.00 60.00 0 0 0 727.38 1046.07 Z" fill="#bf406c" stroke="#fff" stroke-width="1.20"/><path d="M723.99 1022.90 A83.30 83.30 0 0 1 726.58 1022.33 L731.17 1045.18 A60.00 60.00 0 0 0 729.31 1045.58 Z" fill="#40bf93" stroke="#fff" stroke-width="1.20"/><path d="M726.58 1022.33 A83.30 83.30 0 0 1 729.08 1021.87 L732.97 1044.84 A60.00 60.00 0 0 0 731.17 1045.18 Z" fill="#abbf40" stroke="#fff" stroke-width="1.20"/><path d="M729.08 1021.87 A83.30 83.30 0 0 1 731.49 1021.50 L734.71 1044.58 A60.00 60.00 0 0 0 732.97 1044.84 Z" fill="#5440bf" stroke="#fff" stroke-width="1.20"/><path d="M731.49 1021.50 A83.30 83.30 0 0 1 733.82 1021.21 L736.39 1044.37 A60.00 60.00 0 0 0 734.71 1044.58 Z" fill="#bf7440" stroke="#fff" stroke-width="1.20"/><path d="M733.82 1021.21 A83.30 83.30 0 0 1 736.06 1020.99 L738.00 1044.21 A60.00 60.00 0 0 0 736.39 1044.37 Z" fill="#408bbf" stroke="#fff" stroke-width="1.20"/><path d="M736.06 1020.99 A83.30 83.30 0 0 1 738.21 1020.84 L739.55 1044.10 A60.00 60.00 0 0 0 738.00 1044.21 Z" fill="#4cbf40" stroke="#fff" stroke-width="1.20"/><path d="M738.21 1020.84 A83.30 83.30 0 0 1 740.28 1020.74 L741.04 1044.03 A60.00 60.00 0 0 0 739.55 1044.10 Z" fill="#b340bf" stroke="#fff" stroke-width="1.20"/><path d="M740.28 1020.74 A83.30 83.30 0 0 1 742.27 1020.70 L742.48 1044.00 A60.00 60.00 0 0 0 741.04 1044.03 Z" fill="#bf40b9" stroke="#fff" stroke-width="1.20"/></svg><svg class="a" style="left:219px;top:1009px" width="21" height="21" viewBox="219 1009 21 21"><circle cx="229.50" cy="1019.10" r="8.20" fill="#b5b5b5"/><path d="M227.50 1014.50 L232.10 1019.10 L227.50 1023.70" stroke="#fff" stroke-width="2.7" fill="none" stroke-linecap="butt" stroke-linejoin="miter"/></svg><svg class="a" style="left:852px;top:1009px" width="20" height="21" viewBox="852 1009 20 21"><circle cx="862.00" cy="1019.10" r="8.20" fill="#b5b5b5"/><path d="M860.00 1014.50 L864.60 1019.10 L860.00 1023.70" stroke="#fff" stroke-width="2.7" fill="none" stroke-linecap="butt" stroke-linejoin="miter"/></svg><svg class="a" style="left:245px;top:1008px" width="15" height="15" viewBox="245 1008 15 15"><circle cx="252.50" cy="1015.50" r="6.3" fill="#3bbf8c"/></svg><div class="t" style="left:262.70px;top:1008.00px;font-size:15.5px;line-height:15.5px;color:#4d4d4d;transform:scaleX(0.9355);">TCP/80 (http)</div><svg class="a" style="left:245px;top:1031px" width="15" height="15" viewBox="245 1031 15 15"><circle cx="252.50" cy="1038.25" r="6.3" fill="#b2bc33"/></svg><div class="t" style="left:262.70px;top:1031.00px;font-size:15.5px;line-height:15.5px;color:#4d4d4d;transform:scaleX(0.9355);">TCP/443 (https)</div><svg class="a" style="left:245px;top:1054px" width="15" height="14" viewBox="245 1054 15 14"><circle cx="252.50" cy="1061.00" r="6.3" fill="#5039c3"/></svg><div class="t" style="left:262.70px;top:1054.00px;font-size:15.5px;line-height:15.5px;color:#4d4d4d;transform:scaleX(0.9355);">TCP/49358</div><svg class="a" style="left:245px;top:1076px" width="15" height="15" viewBox="245 1076 15 15"><circle cx="252.50" cy="1083.75" r="6.3" fill="#c36f3a"/></svg><div class="t" style="left:262.70px;top:1076.00px;font-size:15.5px;line-height:15.5px;color:#4d4d4d;transform:scaleX(0.9355);">UDP/53807</div><svg class="a" style="left:245px;top:1099px" width="15" height="15" viewBox="245 1099 15 15"><circle cx="252.50" cy="1106.50" r="6.3" fill="#3c8fc3"/></svg><div class="t" style="left:262.70px;top:1099.00px;font-size:15.5px;line-height:15.5px;color:#4d4d4d;transform:scaleX(0.9355);">UDP/1853 (vids-avtp)</div><svg class="a" style="left:245px;top:1122px" width="15" height="15" viewBox="245 1122 15 15"><circle cx="252.50" cy="1129.25" r="6.3" fill="#45c13a"/></svg><div class="t" style="left:262.70px;top:1122.00px;font-size:15.5px;line-height:15.5px;color:#4d4d4d;transform:scaleX(0.9355);">TCP/1060 (polestar)</div><svg class="a" style="left:245px;top:1145px" width="15" height="14" viewBox="245 1145 15 14"><circle cx="252.50" cy="1152.00" r="6.3" fill="#b23ac3"/></svg><div class="t" style="left:262.70px;top:1144.00px;font-size:15.5px;line-height:15.5px;color:#4d4d4d;transform:scaleX(0.9355);">TCP/50193</div><svg class="a" style="left:245px;top:1167px" width="15" height="15" viewBox="245 1167 15 15"><circle cx="252.50" cy="1174.75" r="6.3" fill="#c13aa5"/></svg><div class="t" style="left:262.70px;top:1167.00px;font-size:15.5px;line-height:15.5px;color:#4d4d4d;transform:scaleX(0.9355);">TCP/46939</div><svg class="a" style="left:245px;top:1190px" width="15" height="15" viewBox="245 1190 15 15"><circle cx="252.50" cy="1197.50" r="6.3" fill="#3ac35a"/></svg><div class="t" style="left:262.70px;top:1190.00px;font-size:15.5px;line-height:15.5px;color:#4d4d4d;transform:scaleX(0.9355);">TCP/4070 (tripe)</div><svg class="a" style="left:877px;top:1008px" width="15" height="15" viewBox="877 1008 15 15"><circle cx="884.60" cy="1015.50" r="6.3" fill="#b2bc33"/></svg><div class="t" style="left:894.80px;top:1008.00px;font-size:15.5px;line-height:15.5px;color:#4d4d4d;transform:scaleX(0.9355);">TCP/443 (https)</div><svg class="a" style="left:877px;top:1031px" width="15" height="15" viewBox="877 1031 15 15"><circle cx="884.60" cy="1038.25" r="6.3" fill="#3c8fc3"/></svg><div class="t" style="left:894.80px;top:1031.00px;font-size:15.5px;line-height:15.5px;color:#4d4d4d;transform:scaleX(0.9355);">UDP/1853 (vids-avtp)</div><svg class="a" style="left:877px;top:1054px" width="15" height="14" viewBox="877 1054 15 14"><circle cx="884.60" cy="1061.00" r="6.3" fill="#c3513a"/></svg><div class="t" style="left:894.80px;top:1054.00px;font-size:15.5px;line-height:15.5px;color:#4d4d4d;transform:scaleX(0.9355);">TCP/5440</div><svg class="a" style="left:877px;top:1076px" width="15" height="15" viewBox="877 1076 15 15"><circle cx="884.60" cy="1083.75" r="6.3" fill="#3bbf8c"/></svg><div class="t" style="left:894.80px;top:1076.00px;font-size:15.5px;line-height:15.5px;color:#4d4d4d;transform:scaleX(0.9355);">TCP/80 (http)</div><svg class="a" style="left:877px;top:1099px" width="15" height="15" viewBox="877 1099 15 15"><circle cx="884.60" cy="1106.50" r="6.3" fill="#3aaac3"/></svg><div class="t" style="left:894.80px;top:1099.00px;font-size:15.5px;line-height:15.5px;color:#4d4d4d;transform:scaleX(0.9355);">TCP/1731 (msiccp)</div><svg class="a" style="left:877px;top:1122px" width="15" height="15" viewBox="877 1122 15 15"><circle cx="884.60" cy="1129.25" r="6.3" fill="#6cc13a"/></svg><div class="t" style="left:894.80px;top:1122.00px;font-size:15.5px;line-height:15.5px;color:#4d4d4d;transform:scaleX(0.9355);">TCP/60658</div><svg class="a" style="left:877px;top:1145px" width="15" height="14" viewBox="877 1145 15 14"><circle cx="884.60" cy="1152.00" r="6.3" fill="#8f3ac3"/></svg><div class="t" style="left:894.80px;top:1144.00px;font-size:15.5px;line-height:15.5px;color:#4d4d4d;transform:scaleX(0.9355);">TCP/49311</div><svg class="a" style="left:877px;top:1167px" width="15" height="15" viewBox="877 1167 15 15"><circle cx="884.60" cy="1174.75" r="6.3" fill="#c33aa5"/></svg><div class="t" style="left:894.80px;top:1167.00px;font-size:15.5px;line-height:15.5px;color:#4d4d4d;transform:scaleX(0.9355);">TCP/60283</div><svg class="a" style="left:877px;top:1190px" width="15" height="15" viewBox="877 1190 15 15"><circle cx="884.60" cy="1197.50" r="6.3" fill="#3ac35a"/></svg><div class="t" style="left:894.80px;top:1190.00px;font-size:15.5px;line-height:15.5px;color:#4d4d4d;transform:scaleX(0.9355);">TCP/58880</div><div class="a" style="left:408.00px;top:1003.50px;width:15.00px;height:206.50px;background:#f9f9f9;border-left:1px solid #e7e7e7;border-right:1px solid #e7e7e7;box-sizing:border-box"></div><div class="a" style="left:412.00px;top:1005.20px;width:8.00px;height:28.60px;background:#c1c1c1;border-radius:4px"></div><div class="a" style="left:1040.00px;top:1003.50px;width:15.00px;height:206.50px;background:#f9f9f9;border-left:1px solid #e7e7e7;border-right:1px solid #e7e7e7;box-sizing:border-box"></div><div class="a" style="left:1044.00px;top:1005.20px;width:8.00px;height:28.60px;background:#c1c1c1;border-radius:4px"></div><svg class="a" style="left:610px;top:1009px" width="21" height="21" viewBox="610 1009 21 21"><circle cx="620.30" cy="1019.30" r="8.20" fill="#b5b5b5"/><path d="M622.30 1014.70 L617.70 1019.30 L622.30 1023.90" stroke="#fff" stroke-width="2.7" fill="none" stroke-linecap="butt" stroke-linejoin="miter"/></svg><svg class="a" style="left:1242px;top:1009px" width="21" height="21" viewBox="1242 1009 21 21"><circle cx="1252.50" cy="1019.30" r="8.20" fill="#b5b5b5"/><path d="M1254.50 1014.70 L1249.90 1019.30 L1254.50 1023.90" stroke="#fff" stroke-width="2.7" fill="none" stroke-linecap="butt" stroke-linejoin="miter"/></svg><div class="t" style="left:465.00px;top:1043.00px;font-size:17.2px;line-height:17.2px;color:#000;transform:scaleX(0.9864);">Source Ports</div><div class="t" style="left:432.00px;top:1059.00px;font-size:51px;line-height:51px;color:#000;font-weight:bold;transform:scaleX(1.0385);">15,438</div><div class="t" style="left:467.50px;top:1171.00px;font-size:17.2px;line-height:17.2px;color:#000;transform:scaleX(0.9965);">Source Ports</div><div class="t" style="left:1079.85px;top:1043.00px;font-size:17.2px;line-height:17.2px;color:#000;transform:scaleX(1.0261);">Destination Ports</div><div class="t" style="left:1064.20px;top:1059.00px;font-size:51px;line-height:51px;color:#000;font-weight:bold;transform:scaleX(1.0602);">11,122</div><div class="t" style="left:1082.60px;top:1171.00px;font-size:17.2px;line-height:17.2px;color:#000;transform:scaleX(1.0254);">Destination Ports</div><div class="a" style="left:0.00px;top:1160.00px;width:1273.00px;height:46.00px;background:linear-gradient(to bottom, rgba(0,0,0,0) 0%, rgba(0,0,0,0.012) 30%, rgba(0,0,0,0.06) 100%);"></div></body></html>
